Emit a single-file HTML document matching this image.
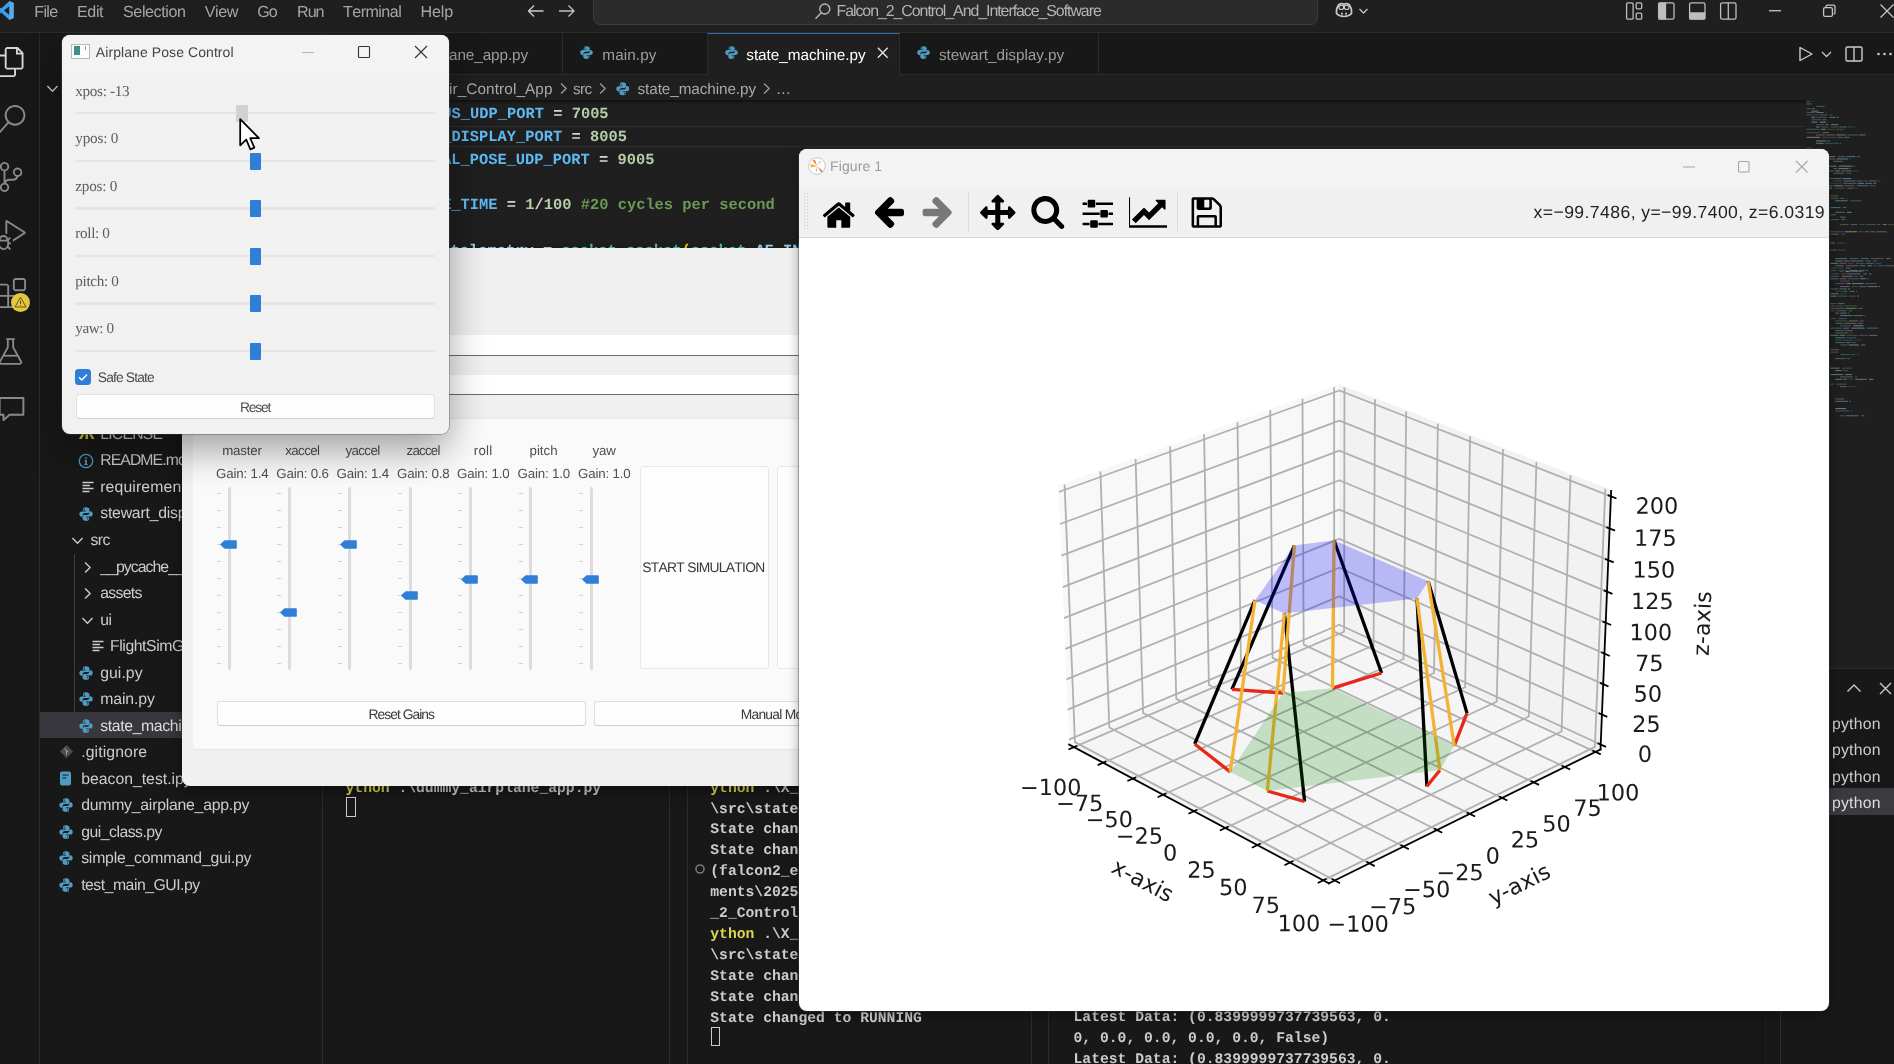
<!DOCTYPE html>
<html><head><meta charset="utf-8"><title>screen</title>
<style>
*{box-sizing:border-box}
html,body{margin:0;padding:0}
body{font-kerning:none;text-rendering:geometricPrecision;width:1894px;height:1064px;overflow:hidden;position:relative;background:#181818;font-family:"Liberation Sans",sans-serif;color:#ccc}
.a{position:absolute}
.t{position:absolute;white-space:pre;line-height:1;transform-origin:0 50%}
.ui{font-family:"Liberation Sans",sans-serif;font-size:15.2px;color:#ccc}
.mono{font-family:"Liberation Mono",monospace}
.serif{font-family:"Liberation Serif",serif}
svg{display:block}
.code{position:absolute;left:0;white-space:pre;font-family:"Liberation Mono",monospace;font-weight:bold;font-size:15.4px;line-height:23px;height:23px;color:#d4d4d4}
.term{position:absolute;white-space:pre;font-family:"Liberation Mono",monospace;font-weight:bold;font-size:14.7px;line-height:20.92px;color:#ccc}
.row{position:absolute;left:40px;height:26.4px;width:282px}
.row .t{top:50%;margin-top:-8px;font-size:15.3px;color:#ccc}
.win{position:absolute;overflow:hidden}
.qt{font-family:"Liberation Sans",sans-serif;color:#3c3c3c}
#root{position:absolute;left:0;top:0;width:1894px;height:1064px;overflow:hidden;will-change:transform;transform:translateZ(0)}
</style></head><body><div id="root">
<svg width="0" height="0" style="position:absolute"><defs>
<symbol id="py" viewBox="0 0 16 16"><path fill="#4f9bc2" d="M7.900 1.200c-2.700 0-2.900 1.100-2.900 2.100v1.500h3v.6H3.700c-1.500 0-2.400 1.200-2.400 2.700s.9 2.700 2.400 2.700h1V9.200c0-1.200 1-2.100 2.200-2.100h2.800c1 0 1.700-.8 1.700-1.700V3.300c0-1-.9-2.100-3.500-2.100zM6.300 2.500a.65.65 0 1 1 0 1.300.65.65 0 0 1 0-1.300z"/><path fill="#4f9bc2" d="M8.100 14.800c2.700 0 2.900-1.100 2.900-2.100v-1.500H8v-.6h4.300c1.500 0 2.400-1.200 2.400-2.700s-.9-2.700-2.400-2.700h-1v1.600c0 1.200-1 2.100-2.200 2.100H6.300c-1 0-1.700.8-1.700 1.700v2.100c0 1 .9 2.100 3.500 2.100zm1.600-1.300a.65.65 0 1 1 0-1.300.65.65 0 0 1 0 1.300z"/></symbol>
<symbol id="chevd" viewBox="0 0 16 16"><path fill="none" stroke="#ccc" stroke-width="1.3" d="M3.200 5.700 8 10.500l4.800-4.800"/></symbol>
<symbol id="chevr" viewBox="0 0 16 16"><path fill="none" stroke="#ccc" stroke-width="1.3" d="M5.700 3.200 10.500 8l-4.800 4.800"/></symbol>
<symbol id="lines" viewBox="0 0 16 16"><path fill="none" stroke="#ccc" stroke-width="1.700" d="M2.500 3.500h11M2.500 6.500h7.500M2.500 9.500h11M2.500 12.500h7"/></symbol>
</defs></svg>

<!-- ===== title bar ===== -->
<div class="a" style="left:0;top:0;width:1894px;height:32.500px;background:#1f1f1f;border-bottom:1px solid #2b2b2b"></div>
<svg class="a" style="left:-6.500px;top:0.300px" width="21" height="21" viewBox="0 0 24 24"><path fill="#3c9de8" d="M17.600 1.100 8.300 9.700 4.200 6.600 2.500 7.500v9l1.700.9 4.100-3.100 9.300 8.600 4.900-2.200V3.300z"/><path fill="#1f1f1f" d="M17.500 7.200v9.600L11.400 12zM4.300 9.600v4.800L6.800 12z"/><path fill="#5ab0f0" d="M17.600 1.100v21.800l4.900-2.200V3.300z" opacity=".8"/></svg>
<span class="t" style="left:34.3px;top:4.1px;font-size:16.1px;color:#a6a6a6;letter-spacing:-0.71px;">File</span>
<span class="t" style="left:76.9px;top:4.1px;font-size:16.1px;color:#a6a6a6;letter-spacing:-0.35px;">Edit</span>
<span class="t" style="left:123.0px;top:4.1px;font-size:16.1px;color:#a6a6a6;letter-spacing:-0.40px;">Selection</span>
<span class="t" style="left:204.7px;top:4.1px;font-size:16.1px;color:#a6a6a6;letter-spacing:-0.39px;">View</span>
<span class="t" style="left:257.3px;top:4.1px;font-size:16.1px;color:#a6a6a6;letter-spacing:-1.00px;">Go</span>
<span class="t" style="left:297.0px;top:4.1px;font-size:16.1px;color:#a6a6a6;letter-spacing:-0.99px;">Run</span>
<span class="t" style="left:343.1px;top:4.1px;font-size:16.1px;color:#a6a6a6;letter-spacing:-0.57px;">Terminal</span>
<span class="t" style="left:420.4px;top:4.1px;font-size:16.1px;color:#a6a6a6;letter-spacing:-0.13px;">Help</span>
<svg class="a" style="left:526px;top:2px" width="50" height="18" viewBox="0 0 50 18" fill="none" stroke="#ccc" stroke-width="1.400"><path d="M17.500 9H2.500M8 3.500 2.500 9 8 14.500"/><path d="M33 9h15M42.500 3.500 48 9l-5.500 5.500" stroke="#c0c0c0"/></svg>
<div class="a" style="left:592.500px;top:-6px;width:725.500px;height:30.800px;background:#2b2b2b;border:1px solid #3c3c3c;border-radius:7px"></div>
<svg class="a" style="left:814px;top:2px" width="18" height="18" viewBox="0 0 18 18" fill="none" stroke="#bbb" stroke-width="1.300"><circle cx="10.800" cy="7" r="5"/><path d="M7.300 10.800 1.500 16.800"/></svg>
<span class="t" style="left:836.5px;top:3.5px;font-size:15.9px;color:#b4b4b4;letter-spacing:-1.04px;">Falcon_2_Control_And_Interface_Software</span>
<svg class="a" style="left:1333px;top:1px" width="40" height="20" viewBox="0 0 40 20" fill="none" stroke="#ccc" stroke-width="1.500"><path d="M3.500 9.500c0-2 .6-3.300 1.400-4 .4-2.200 1.800-3 4-3 1.200 0 1.800.6 2.100 1.300.3-.7.900-1.300 2.100-1.300 2.200 0 3.600.8 4 3 .8.700 1.400 2 1.400 4v3c-1.600 1.700-4.400 3-7.500 3s-5.900-1.300-7.500-3z" stroke-width="1.700"/><path d="M6 6.200c.4-1.500 1.300-2 2.600-2 1.400 0 2 .7 2 2s-.6 2.300-2.300 2.300S5.700 7.500 6 6.200zM16 6.200c-.4-1.500-1.300-2-2.600-2-1.400 0-2 .7-2 2s.6 2.300 2.300 2.300 2.600-1 2.300-2.300z" stroke-width="1.200"/><path d="M9 11.500v2.200M13 11.500v2.200" stroke-width="1.600"/><path d="M26.500 8l4 4 4-4" stroke-width="1.200"/></svg>
<svg class="a" style="left:1625px;top:2px" width="115" height="18" viewBox="0 0 115 18" fill="none" stroke="#bdbdbd" stroke-width="1.300"><rect x="1.600" y=".800" width="6.500" height="16.400" rx="1.200"/><rect x="11.200" y=".800" width="5.500" height="6" rx="1"/><rect x="11.200" y="11.200" width="5.500" height="6" rx="1"/><rect x="33.600" y=".800" width="15.400" height="16.400" rx="1.800"/><path d="M34 1.200h6.500v15.600H34z" fill="#bdbdbd"/><rect x="64.600" y=".800" width="15.400" height="16.400" rx="1.800"/><path d="M65 11h14.600v5.800H65z" fill="#bdbdbd"/><rect x="95.600" y=".800" width="15.400" height="16.400" rx="1.800"/><path d="M103.300.800v16.400"/></svg>
<svg class="a" style="left:1765px;top:1.500px" width="129" height="18" viewBox="0 0 129 18" fill="none" stroke="#c4c4c4" stroke-width="1.300"><path d="M4 8.700h12"/><rect x="58.600" y="5.600" width="8.800" height="8.800" rx="1.500"/><path d="M61 5.500V4.600c0-.8.600-1.500 1.500-1.500h6c.8 0 1.500.7 1.500 1.500v6c0 .8-.6 1.400-1.400 1.500"/><path d="M115.500 2.500l13 13M128.500 2.500l-13 13"/></svg>

<!-- ===== activity bar ===== -->
<div class="a" style="left:0;top:33px;width:39.500px;height:1031px;background:#181818;border-right:1px solid #2b2b2b"></div>
<svg class="a" style="left:-4.200px;top:46.5px" width="30" height="30" viewBox="0 0 24 24"><path fill="#d7d7d7" d="M17.500 0h-9L7 1.500V6H2.500L1 7.500v15.070L2.500 24h12.070L16 22.570V18h4.700l1.300-1.430V4.500L17.500 0zm0 2.120l2.380 2.380H17.500V2.120zm-3 20.380h-12v-15H7v9.070L8.500 18h6v4.500zm6-6h-12v-15H16V6h4.500v10.500z"/></svg>
<svg class="a" style="left:-4.200px;top:104.5px" width="30" height="30" viewBox="0 0 24 24"><path fill="#8a8a8a" d="M15.250 0a8.250 8.250 0 0 0-6.180 13.720L1 22.880l1.120 1 8.050-9.120A8.251 8.251 0 1 0 15.250.01V0zm0 15a6.750 6.750 0 1 1 0-13.500 6.750 6.750 0 0 1 0 13.500z"/></svg>
<svg class="a" style="left:-4.200px;top:162px" width="30" height="30" viewBox="0 0 24 24"><path fill="#8a8a8a" d="M21.007 8.222A3.738 3.738 0 0 0 15.045 5.200a3.737 3.737 0 0 0 1.156 6.583 2.988 2.988 0 0 1-2.668 1.670h-2.990a4.456 4.456 0 0 0-2.989 1.165V7.400a3.737 3.737 0 1 0-1.494 0v9.117a3.776 3.776 0 1 0 1.816.099 2.990 2.990 0 0 1 2.668-1.667h2.990a4.484 4.484 0 0 0 4.223-3.039 3.736 3.736 0 0 0 3.250-3.687zM4.565 3.738a2.242 2.242 0 1 1 4.484 0 2.242 2.242 0 0 1-4.484 0zm4.484 16.441a2.242 2.242 0 1 1-4.484 0 2.242 2.242 0 0 1 4.484 0zm8.221-9.715a2.242 2.242 0 1 1 0-4.485 2.242 2.242 0 0 1 0 4.485z"/></svg>
<svg class="a" style="left:-4.200px;top:220px" width="30" height="30" viewBox="0 0 24 24"><path fill="#8a8a8a" d="M10.940 13.500l-1.320 1.320a3.730 3.730 0 0 0-7.240 0L1.060 13.500 0 14.560l1.720 1.720-.22.220V18H0v1.500h1.500v.080c.077.489.214.966.41 1.420L0 22.940 1.060 24l1.650-1.650A4.308 4.308 0 0 0 6 24a4.310 4.310 0 0 0 3.290-1.650L10.940 24 12 22.940 10.090 21c.198-.464.336-.951.41-1.450v-.1H12V18h-1.500v-1.500l-.22-.22L12 14.560l-1.060-1.060zM6 13.500a2.250 2.250 0 0 1 2.250 2.250h-4.500A2.250 2.250 0 0 1 6 13.500zm3 6a3.330 3.330 0 0 1-3 3 3.330 3.330 0 0 1-3-3v-2.250h6v2.250zm14.760-9.900v1.260L13.500 17.370V15.600l8.500-5.370L9 2v9.460a5.070 5.070 0 0 0-1.500-.72V.63L8.640 0l15.120 9.600z"/></svg>
<svg class="a" style="left:-4.200px;top:278.100px" width="30" height="30" viewBox="0 0 24 24"><path fill="#8a8a8a" d="M13.500 1.500L15 0h7.500L24 1.500V9l-1.500 1.500H15L13.500 9V1.500zm1.500 0V9h7.500V1.500H15zM0 15V6l1.500-1.500H9L10.500 6v7.500H18l1.500 1.500v7.500L18 24H1.500L0 22.500V15zm9-1.500V6H1.500v7.500H9zM9 15H1.500v7.500H9V15zm1.500 7.500H18V15h-7.500v7.500z"/></svg>
<div class="a" style="left:11px;top:293.300px;width:19px;height:19px;border-radius:50%;background:#e3c742"></div>
<svg class="a" style="left:14px;top:296.300px" width="13" height="12" viewBox="0 0 13 12" fill="none" stroke="#6b5a10" stroke-width="1" stroke-linejoin="round"><path d="M6.500 1.200 12 11H1z"/><path d="M6.500 4.500v3.500M6.500 9v.8"/></svg>
<svg class="a" style="left:-3.800px;top:336.500px" width="29" height="29" viewBox="0 0 24 24" fill="none" stroke="#8a8a8a" stroke-width="1.500" stroke-linejoin="round"><path d="M8.500 1.800h7M9.800 1.800v6.700L3.300 20.300c-.5 1 .2 2 1.300 2h14.800c1.100 0 1.800-1 1.300-2L14.200 8.500V1.800"/><path d="M6.300 15.500h11.400"/></svg>
<svg class="a" style="left:-4.200px;top:393px" width="31" height="31" viewBox="0 0 24 24" fill="none" stroke="#8a8a8a" stroke-width="1.500" stroke-linejoin="round"><path d="M2.800 3.800h18.400v13H10.500L5.800 21v-4.200h-3z"/></svg>

<!-- ===== sidebar ===== -->
<div class="a" style="left:40px;top:33px;width:282.500px;height:1031px;background:#181818;border-right:1px solid #2b2b2b"></div>
<svg class="a" style="left:43.500px;top:79.500px" width="17" height="17"><use href="#chevd"/></svg>
<div class="a" style="left:74px;top:554px;width:1px;height:184px;background:#3c3c3c"></div>
<div class="a" style="left:40px;top:712px;width:282px;height:26.200px;background:#37373d"></div>
<div class="a" style="left:79px;top:427px;width:14px;height:14px;color:#cbcb41;font:bold 17px 'Liberation Sans',sans-serif;line-height:14px">&#1046;</div>
<span class="t" style="left:100.2px;top:427.4px;font-size:15.8px;color:#ccc;letter-spacing:-0.78px;">LICENSE</span>
<svg class="a" style="left:77.500px;top:452.500px" width="16" height="16" viewBox="0 0 16 16" fill="none" stroke="#4f9bc2" stroke-width="1.300"><circle cx="8" cy="8" r="6.700"/><path d="M8 7v4.500M8 4.200v1.500" stroke-width="1.700"/><path d="M6.500 7.300h1.500M6.300 11.500h3.400" stroke-width="1"/></svg>
<span class="t" style="left:100.2px;top:453.4px;font-size:15.8px;color:#ccc;letter-spacing:-0.93px;">README.md</span>
<svg class="a" style="left:79.500px;top:479px" width="16" height="16"><use href="#lines"/></svg>
<span class="t" style="left:100.2px;top:479.9px;font-size:15.8px;color:#ccc;letter-spacing:0.13px;">requirements.txt</span>
<svg class="a" style="left:77.500px;top:505.500px" width="16" height="16"><use href="#py"/></svg>
<span class="t" style="left:100.2px;top:506.4px;font-size:15.8px;color:#ccc;letter-spacing:-0.21px;">stewart_display.py</span>
<svg class="a" style="left:69px;top:532px" width="17" height="17"><use href="#chevd"/></svg>
<span class="t" style="left:90.5px;top:533.2px;font-size:15.8px;color:#ccc;letter-spacing:-0.60px;">src</span>
<svg class="a" style="left:79px;top:558.500px" width="17" height="17"><use href="#chevr"/></svg>
<span class="t" style="left:100.2px;top:559.7px;font-size:15.8px;color:#ccc;letter-spacing:-0.94px;">__pycache__</span>
<svg class="a" style="left:79px;top:585px" width="17" height="17"><use href="#chevr"/></svg>
<span class="t" style="left:100.2px;top:586.2px;font-size:15.8px;color:#ccc;letter-spacing:-0.71px;">assets</span>
<svg class="a" style="left:79px;top:611.500px" width="17" height="17"><use href="#chevd"/></svg>
<span class="t" style="left:100.2px;top:612.7px;font-size:15.8px;color:#ccc;letter-spacing:-0.37px;">ui</span>
<svg class="a" style="left:89.500px;top:638px" width="16" height="16"><use href="#lines"/></svg>
<span class="t" style="left:110.0px;top:639.2px;font-size:15.8px;color:#ccc;letter-spacing:-0.43px;">FlightSimGUI.ui</span>
<svg class="a" style="left:77.500px;top:664.500px" width="16" height="16"><use href="#py"/></svg>
<span class="t" style="left:100.2px;top:665.7px;font-size:15.8px;color:#ccc;letter-spacing:0.05px;">gui.py</span>
<svg class="a" style="left:77.500px;top:691px" width="16" height="16"><use href="#py"/></svg>
<span class="t" style="left:100.2px;top:692.2px;font-size:15.8px;color:#ccc;letter-spacing:-0.10px;">main.py</span>
<svg class="a" style="left:77.500px;top:717.500px" width="16" height="16"><use href="#py"/></svg>
<span class="t" style="left:100.2px;top:718.7px;font-size:15.8px;color:#ddd;letter-spacing:-0.36px;">state_machine.py</span>
<svg class="a" style="left:58.500px;top:744px" width="15" height="15" viewBox="0 0 15 15"><path fill="#4a4f4f" d="M7.500 1 14 7.500 7.500 14 1 7.500z"/><path stroke="#9aa" stroke-width="1" fill="none" d="M5.500 4.500 9 8M7.500 6.500v4"/></svg>
<span class="t" style="left:81.2px;top:745.2px;font-size:15.8px;color:#ccc;letter-spacing:0.10px;">.gitignore</span>
<svg class="a" style="left:58.500px;top:770.500px" width="13" height="15" viewBox="0 0 13 15"><rect x="1" y=".5" width="11" height="14" rx="2" fill="#4f9bc2"/><path d="M3.500 4h6M3.500 7h4" stroke="#181818" stroke-width="1.200"/></svg>
<span class="t" style="left:81.2px;top:771.7px;font-size:15.8px;color:#ccc;letter-spacing:-0.01px;">beacon_test.ipynb</span>
<svg class="a" style="left:58px;top:797px" width="16" height="16"><use href="#py"/></svg>
<span class="t" style="left:81.2px;top:798.4px;font-size:15.8px;color:#ccc;letter-spacing:-0.24px;">dummy_airplane_app.py</span>
<svg class="a" style="left:58px;top:823.500px" width="16" height="16"><use href="#py"/></svg>
<span class="t" style="left:81.2px;top:824.9px;font-size:15.8px;color:#ccc;letter-spacing:-0.51px;">gui_class.py</span>
<svg class="a" style="left:58px;top:850px" width="16" height="16"><use href="#py"/></svg>
<span class="t" style="left:81.2px;top:851.4px;font-size:15.8px;color:#ccc;letter-spacing:-0.22px;">simple_command_gui.py</span>
<svg class="a" style="left:58px;top:876.500px" width="16" height="16"><use href="#py"/></svg>
<span class="t" style="left:81.2px;top:877.9px;font-size:15.8px;color:#ccc;letter-spacing:-0.50px;">test_main_GUI.py</span>

<!-- ===== editor ===== -->
<div class="a" style="left:323px;top:33px;width:1571px;height:41.500px;background:#181818;border-bottom:1px solid #2b2b2b"></div>
<div class="a" style="left:323px;top:74.500px;width:1571px;height:594px;background:#1f1f1f"></div>
<div class="a" style="left:562px;top:33px;width:1px;height:41px;background:#2b2b2b"></div>
<div class="a" style="left:1097.500px;top:33px;width:1px;height:41px;background:#2b2b2b"></div>
<div class="a" style="left:707px;top:33px;width:193px;height:42px;background:#1f1f1f;border-top:1.500px solid #2a6db3;border-left:1px solid #2b2b2b;border-right:1px solid #2b2b2b"></div>
<span class="t" style="left:449.0px;top:47.6px;font-size:15.3px;color:#9d9d9d;letter-spacing:-0.09px;">ane_app.py</span>
<svg class="a" style="left:579.3px;top:45.200px" width="15" height="15"><use href="#py"/></svg>
<span class="t" style="left:602.3px;top:47.6px;font-size:15.3px;color:#9d9d9d;letter-spacing:0.09px;">main.py</span>
<svg class="a" style="left:723.8px;top:45.200px" width="15" height="15"><use href="#py"/></svg>
<span class="t" style="left:746.3px;top:47.6px;font-size:15.3px;color:#fff;letter-spacing:-0.04px;">state_machine.py</span>
<svg class="a" style="left:876px;top:46.300px" width="13.500" height="13.500" viewBox="0 0 15 15" fill="none" stroke="#e6e6e6" stroke-width="1.500"><path d="M2 2l11 11M13 2 2 13"/></svg>
<svg class="a" style="left:915.8px;top:45.200px" width="15" height="15"><use href="#py"/></svg>
<span class="t" style="left:939.0px;top:47.6px;font-size:15.3px;color:#9d9d9d;letter-spacing:-0.04px;">stewart_display.py</span>
<svg class="a" style="left:1796px;top:44px" width="98" height="20" viewBox="0 0 98 20" fill="none" stroke="#ccc" stroke-width="1.400" stroke-linejoin="round"><path d="M4 3.500v13l12-6.500z"/><path d="M26 8l4.500 4.500L35 8" stroke-width="1.200"/><rect x="50" y="3" width="16" height="14" rx="1.500"/><path d="M58 3v14"/><g fill="#ccc" stroke="none"><circle cx="82.500" cy="10" r="1.300"/><circle cx="88.500" cy="10" r="1.300"/><circle cx="94.500" cy="10" r="1.300"/></g></svg>
<!-- breadcrumbs -->
<span class="t" style="left:449.0px;top:81.5px;font-size:15.3px;color:#a9a9a9;letter-spacing:0.11px;">ir_Control_App</span>
<svg class="a" style="left:555px;top:80px" width="17" height="17"><use href="#chevr" opacity=".7"/></svg>
<span class="t" style="left:573.0px;top:81.5px;font-size:15.3px;color:#a9a9a9;letter-spacing:-0.64px;">src</span>
<svg class="a" style="left:593.500px;top:80px" width="17" height="17"><use href="#chevr" opacity=".7"/></svg>
<svg class="a" style="left:615px;top:80.500px" width="15.500" height="15.500"><use href="#py"/></svg>
<span class="t" style="left:637.5px;top:81.5px;font-size:15.3px;color:#a9a9a9;letter-spacing:-0.09px;">state_machine.py</span>
<svg class="a" style="left:758px;top:80px" width="17" height="17"><use href="#chevr" opacity=".7"/></svg>
<span class="t" style="left:775.7px;top:81.5px;font-size:15.3px;color:#a9a9a9;letter-spacing:-4.80px;">…</span>
<div class="a" style="left:323px;top:100px;width:1482px;height:4px;background:linear-gradient(#101010,rgba(16,16,16,0))"></div>
<!-- code -->
<div class="a" style="left:323px;top:125.500px;width:1482px;height:21.500px;border-top:1px solid #2e2e2e;border-bottom:1px solid #2e2e2e"></div>
<div class="code" style="left:405.400px;top:102.900px"><span style="color:#5fbaf2">STATUS_UDP_PORT</span> = <span style="color:#b5cea8">7005</span></div>
<div class="code" style="left:377.500px;top:125.700px"><span style="color:#5fbaf2">STEWART_DISPLAY_PORT</span> = <span style="color:#b5cea8">8005</span></div>
<div class="code" style="left:340.400px;top:148.500px"><span style="color:#5fbaf2">AIRPLANE_REAL_POSE_UDP_PORT</span> = <span style="color:#b5cea8">9005</span></div>
<div class="code" style="left:405.200px;top:194.100px"><span style="color:#5fbaf2">CYCLE_TIME</span> = <span style="color:#b5cea8">1</span>/<span style="color:#b5cea8">100</span> <span style="color:#6a9955">#20 cycles per second</span></div>
<div class="code" style="left:367.400px;top:239.700px"><span style="color:#9cdcfe">airplane_telemetry</span> = <span style="color:#4ec9b0">socket</span>.<span style="color:#4ec9b0">socket</span><span style="color:#ffd700">(</span><span style="color:#4ec9b0">socket</span>.<span style="color:#9cdcfe">AF_INET</span>, <span style="color:#4ec9b0">socket</span>.SOCK_DGRAM<span style="color:#ffd700">)</span></div>
<!--MM0--><svg class="a" style="left:0;top:0" width="1894" height="680" viewBox="0 0 1894 680"><rect x="1806.5" y="101.0" width="3.5" height="1.1" fill="#d4d4d4" opacity="0.27"/><rect x="1812.4" y="101.0" width="0.6" height="1.1" fill="#d4d4d4" opacity="0.30"/><rect x="1806.5" y="103.4" width="5.2" height="1.1" fill="#4fc1ff" opacity="0.46"/><rect x="1816.1" y="105.8" width="8.6" height="1.1" fill="#4ec9b0" opacity="0.40"/><rect x="1806.5" y="108.2" width="4.5" height="1.1" fill="#dcdcaa" opacity="0.29"/><rect x="1812.2" y="108.2" width="2.3" height="1.1" fill="#d4d4d4" opacity="0.45"/><rect x="1811.3" y="110.6" width="7.1" height="1.1" fill="#d4d4d4" opacity="0.43"/><rect x="1806.5" y="112.0" width="8.8" height="1.1" fill="#c586c0" opacity="0.37"/><rect x="1816.5" y="112.0" width="7.0" height="1.1" fill="#b5cea8" opacity="0.45"/><rect x="1825.9" y="112.0" width="0.5" height="1.1" fill="#9cdcfe" opacity="0.39"/><rect x="1806.5" y="114.4" width="6.2" height="1.1" fill="#9cdcfe" opacity="0.28"/><rect x="1813.9" y="114.4" width="4.8" height="1.1" fill="#c586c0" opacity="0.29"/><rect x="1819.9" y="114.4" width="7.6" height="1.1" fill="#9cdcfe" opacity="0.27"/><rect x="1829.9" y="114.4" width="2.1" height="1.1" fill="#c586c0" opacity="0.34"/><rect x="1811.3" y="116.8" width="3.8" height="1.1" fill="#9cdcfe" opacity="0.49"/><rect x="1816.3" y="116.8" width="10.7" height="1.1" fill="#9cdcfe" opacity="0.27"/><rect x="1829.3" y="116.8" width="6.4" height="1.1" fill="#4ec9b0" opacity="0.50"/><rect x="1836.9" y="116.8" width="1.5" height="1.1" fill="#dcdcaa" opacity="0.47"/><rect x="1811.3" y="119.2" width="9.7" height="1.1" fill="#d4d4d4" opacity="0.26"/><rect x="1822.2" y="119.2" width="4.4" height="1.1" fill="#b5cea8" opacity="0.35"/><rect x="1811.3" y="121.6" width="6.1" height="1.1" fill="#9cdcfe" opacity="0.45"/><rect x="1819.8" y="121.6" width="6.1" height="1.1" fill="#dcdcaa" opacity="0.50"/><rect x="1828.2" y="121.6" width="0.7" height="1.1" fill="#b5cea8" opacity="0.29"/><rect x="1816.1" y="124.0" width="8.3" height="1.1" fill="#4ec9b0" opacity="0.30"/><rect x="1825.6" y="124.0" width="3.0" height="1.1" fill="#dcdcaa" opacity="0.38"/><rect x="1831.1" y="124.0" width="7.1" height="1.1" fill="#9cdcfe" opacity="0.42"/><rect x="1816.1" y="126.4" width="3.6" height="1.1" fill="#9cdcfe" opacity="0.45"/><rect x="1820.9" y="126.4" width="7.4" height="1.1" fill="#dcdcaa" opacity="0.28"/><rect x="1830.7" y="126.4" width="7.4" height="1.1" fill="#b5cea8" opacity="0.27"/><rect x="1839.3" y="126.4" width="7.8" height="1.1" fill="#9cdcfe" opacity="0.34"/><rect x="1848.3" y="126.4" width="4.1" height="1.1" fill="#4ec9b0" opacity="0.29"/><rect x="1853.7" y="126.4" width="1.8" height="1.1" fill="#4ec9b0" opacity="0.26"/><rect x="1806.5" y="128.8" width="13.5" height="1.1" fill="#4ec9b0" opacity="0.34"/><rect x="1821.2" y="128.8" width="4.3" height="1.1" fill="#d4d4d4" opacity="0.50"/><rect x="1826.7" y="128.8" width="8.3" height="1.1" fill="#6a9955" opacity="0.27"/><rect x="1836.2" y="128.8" width="8.1" height="1.1" fill="#6a9955" opacity="0.37"/><rect x="1806.5" y="132.0" width="13.5" height="1.1" fill="#c586c0" opacity="0.29"/><rect x="1822.4" y="132.0" width="6.7" height="1.1" fill="#d4d4d4" opacity="0.32"/><rect x="1816.1" y="134.4" width="8.7" height="1.1" fill="#9cdcfe" opacity="0.34"/><rect x="1826.0" y="134.4" width="8.9" height="1.1" fill="#d4d4d4" opacity="0.33"/><rect x="1836.1" y="134.4" width="9.7" height="1.1" fill="#b5cea8" opacity="0.45"/><rect x="1847.0" y="134.4" width="11.1" height="1.1" fill="#b5cea8" opacity="0.30"/><rect x="1859.3" y="134.4" width="6.3" height="1.1" fill="#4fc1ff" opacity="0.50"/><rect x="1806.5" y="136.8" width="13.5" height="1.1" fill="#d4d4d4" opacity="0.45"/><rect x="1822.4" y="136.8" width="13.9" height="1.1" fill="#c586c0" opacity="0.27"/><rect x="1837.5" y="136.8" width="5.5" height="1.1" fill="#b5cea8" opacity="0.33"/><rect x="1844.2" y="136.8" width="5.4" height="1.1" fill="#4ec9b0" opacity="0.46"/><rect x="1816.1" y="140.4" width="10.3" height="1.1" fill="#dcdcaa" opacity="0.45"/><rect x="1827.6" y="140.4" width="2.6" height="1.1" fill="#9cdcfe" opacity="0.36"/><rect x="1816.1" y="142.8" width="7.4" height="1.1" fill="#9cdcfe" opacity="0.43"/><rect x="1824.7" y="142.8" width="13.9" height="1.1" fill="#4fc1ff" opacity="0.29"/><rect x="1839.8" y="142.8" width="0.9" height="1.1" fill="#9cdcfe" opacity="0.40"/><rect x="1806.5" y="147.0" width="5.1" height="1.1" fill="#4fc1ff" opacity="0.25"/><rect x="1811.3" y="149.4" width="4.5" height="1.1" fill="#b5cea8" opacity="0.46"/><rect x="1817.0" y="149.4" width="3.3" height="1.1" fill="#b5cea8" opacity="0.32"/><rect x="1821.5" y="149.4" width="1.1" height="1.1" fill="#c586c0" opacity="0.31"/><rect x="1828.5" y="156.0" width="6.9" height="1.1" fill="#d4d4d4" opacity="0.42"/><rect x="1837.8" y="156.0" width="7.6" height="1.1" fill="#d4d4d4" opacity="0.28"/><rect x="1846.6" y="156.0" width="8.8" height="1.1" fill="#4fc1ff" opacity="0.47"/><rect x="1856.6" y="156.0" width="3.6" height="1.1" fill="#9cdcfe" opacity="0.29"/><rect x="1828.5" y="158.4" width="6.6" height="1.1" fill="#d4d4d4" opacity="0.38"/><rect x="1836.3" y="158.4" width="11.6" height="1.1" fill="#9cdcfe" opacity="0.47"/><rect x="1849.1" y="158.4" width="2.1" height="1.1" fill="#6a9955" opacity="0.26"/><rect x="1833.3" y="160.8" width="9.2" height="1.1" fill="#9cdcfe" opacity="0.36"/><rect x="1828.5" y="165.6" width="8.0" height="1.1" fill="#d4d4d4" opacity="0.45"/><rect x="1838.9" y="165.6" width="13.4" height="1.1" fill="#d4d4d4" opacity="0.47"/><rect x="1853.4" y="165.6" width="1.2" height="1.1" fill="#b5cea8" opacity="0.46"/><rect x="1833.3" y="168.0" width="3.8" height="1.1" fill="#b5cea8" opacity="0.36"/><rect x="1838.3" y="168.0" width="10.4" height="1.1" fill="#9cdcfe" opacity="0.47"/><rect x="1849.9" y="168.0" width="0.9" height="1.1" fill="#9cdcfe" opacity="0.42"/><rect x="1828.5" y="170.4" width="5.4" height="1.1" fill="#9cdcfe" opacity="0.35"/><rect x="1835.1" y="170.4" width="4.8" height="1.1" fill="#9cdcfe" opacity="0.46"/><rect x="1841.1" y="170.4" width="10.8" height="1.1" fill="#d4d4d4" opacity="0.35"/><rect x="1853.1" y="170.4" width="4.7" height="1.1" fill="#c586c0" opacity="0.27"/><rect x="1833.3" y="172.8" width="10.7" height="1.1" fill="#dcdcaa" opacity="0.33"/><rect x="1846.4" y="172.8" width="4.7" height="1.1" fill="#9cdcfe" opacity="0.28"/><rect x="1828.5" y="178.0" width="13.0" height="1.1" fill="#9cdcfe" opacity="0.32"/><rect x="1842.7" y="178.0" width="8.5" height="1.1" fill="#9cdcfe" opacity="0.45"/><rect x="1833.3" y="180.4" width="9.3" height="1.1" fill="#c586c0" opacity="0.27"/><rect x="1843.8" y="180.4" width="11.8" height="1.1" fill="#9cdcfe" opacity="0.36"/><rect x="1856.8" y="180.4" width="6.0" height="1.1" fill="#4fc1ff" opacity="0.41"/><rect x="1863.9" y="180.4" width="3.9" height="1.1" fill="#b5cea8" opacity="0.27"/><rect x="1869.1" y="180.4" width="8.0" height="1.1" fill="#c586c0" opacity="0.50"/><rect x="1878.2" y="180.4" width="2.0" height="1.1" fill="#6a9955" opacity="0.41"/><rect x="1828.5" y="182.8" width="13.7" height="1.1" fill="#6a9955" opacity="0.26"/><rect x="1843.4" y="182.8" width="13.3" height="1.1" fill="#9cdcfe" opacity="0.33"/><rect x="1857.8" y="182.8" width="6.2" height="1.1" fill="#d4d4d4" opacity="0.42"/><rect x="1865.2" y="182.8" width="6.8" height="1.1" fill="#4fc1ff" opacity="0.50"/><rect x="1873.2" y="182.8" width="3.0" height="1.1" fill="#d4d4d4" opacity="0.39"/><rect x="1828.5" y="185.2" width="4.2" height="1.1" fill="#9cdcfe" opacity="0.36"/><rect x="1833.9" y="185.2" width="9.0" height="1.1" fill="#dcdcaa" opacity="0.49"/><rect x="1844.1" y="185.2" width="10.6" height="1.1" fill="#b5cea8" opacity="0.34"/><rect x="1857.0" y="185.2" width="11.0" height="1.1" fill="#9cdcfe" opacity="0.35"/><rect x="1869.3" y="185.2" width="6.8" height="1.1" fill="#9cdcfe" opacity="0.25"/><rect x="1828.5" y="187.6" width="3.6" height="1.1" fill="#9cdcfe" opacity="0.46"/><rect x="1834.5" y="187.6" width="10.4" height="1.1" fill="#6a9955" opacity="0.40"/><rect x="1847.3" y="187.6" width="6.2" height="1.1" fill="#d4d4d4" opacity="0.30"/><rect x="1854.7" y="187.6" width="2.4" height="1.1" fill="#6a9955" opacity="0.34"/><rect x="1830.5" y="195.4" width="7.7" height="1.1" fill="#b5cea8" opacity="0.34"/><rect x="1830.5" y="197.8" width="8.5" height="1.1" fill="#b5cea8" opacity="0.31"/><rect x="1840.2" y="197.8" width="4.0" height="1.1" fill="#9cdcfe" opacity="0.29"/><rect x="1846.6" y="197.8" width="0.8" height="1.1" fill="#4fc1ff" opacity="0.32"/><rect x="1835.3" y="200.2" width="12.4" height="1.1" fill="#9cdcfe" opacity="0.41"/><rect x="1850.1" y="200.2" width="11.6" height="1.1" fill="#4ec9b0" opacity="0.35"/><rect x="1830.5" y="207.0" width="10.1" height="1.1" fill="#4fc1ff" opacity="0.46"/><rect x="1843.0" y="207.0" width="3.4" height="1.1" fill="#9cdcfe" opacity="0.36"/><rect x="1835.3" y="211.8" width="9.3" height="1.1" fill="#4fc1ff" opacity="0.46"/><rect x="1847.0" y="211.8" width="4.6" height="1.1" fill="#9cdcfe" opacity="0.49"/><rect x="1830.5" y="214.2" width="5.6" height="1.1" fill="#9cdcfe" opacity="0.34"/><rect x="1840.1" y="216.6" width="5.3" height="1.1" fill="#b5cea8" opacity="0.37"/><rect x="1830.5" y="219.0" width="8.5" height="1.1" fill="#d4d4d4" opacity="0.27"/><rect x="1841.4" y="219.0" width="3.7" height="1.1" fill="#d4d4d4" opacity="0.31"/><rect x="1846.4" y="219.0" width="0.4" height="1.1" fill="#b5cea8" opacity="0.43"/><rect x="1840.1" y="224.0" width="8.4" height="1.1" fill="#dcdcaa" opacity="0.27"/><rect x="1850.9" y="224.0" width="6.2" height="1.1" fill="#4fc1ff" opacity="0.40"/><rect x="1859.5" y="224.0" width="5.2" height="1.1" fill="#4ec9b0" opacity="0.29"/><rect x="1865.9" y="224.0" width="10.2" height="1.1" fill="#6a9955" opacity="0.41"/><rect x="1877.2" y="224.0" width="3.1" height="1.1" fill="#4fc1ff" opacity="0.37"/><rect x="1882.8" y="224.0" width="4.1" height="1.1" fill="#b5cea8" opacity="0.42"/><rect x="1888.1" y="224.0" width="9.0" height="1.1" fill="#6a9955" opacity="0.37"/><rect x="1830.5" y="231.2" width="13.3" height="1.1" fill="#4fc1ff" opacity="0.32"/><rect x="1845.0" y="231.2" width="12.0" height="1.1" fill="#d4d4d4" opacity="0.50"/><rect x="1858.2" y="231.2" width="5.3" height="1.1" fill="#b5cea8" opacity="0.27"/><rect x="1864.7" y="231.2" width="4.6" height="1.1" fill="#d4d4d4" opacity="0.32"/><rect x="1870.5" y="231.2" width="4.5" height="1.1" fill="#9cdcfe" opacity="0.38"/><rect x="1876.1" y="231.2" width="10.7" height="1.1" fill="#b5cea8" opacity="0.37"/><rect x="1830.5" y="233.6" width="8.4" height="1.1" fill="#d4d4d4" opacity="0.35"/><rect x="1841.3" y="233.6" width="3.8" height="1.1" fill="#c586c0" opacity="0.34"/><rect x="1830.5" y="242.4" width="4.3" height="1.1" fill="#b5cea8" opacity="0.43"/><rect x="1837.2" y="242.4" width="6.2" height="1.1" fill="#c586c0" opacity="0.27"/><rect x="1844.6" y="242.4" width="1.7" height="1.1" fill="#4ec9b0" opacity="0.27"/><rect x="1830.5" y="249.6" width="6.1" height="1.1" fill="#9cdcfe" opacity="0.31"/><rect x="1837.8" y="249.6" width="7.8" height="1.1" fill="#c586c0" opacity="0.30"/><rect x="1835.3" y="258.0" width="11.9" height="1.1" fill="#9cdcfe" opacity="0.35"/><rect x="1849.6" y="258.0" width="9.0" height="1.1" fill="#9cdcfe" opacity="0.26"/><rect x="1861.1" y="258.0" width="7.5" height="1.1" fill="#4ec9b0" opacity="0.44"/><rect x="1871.0" y="258.0" width="12.6" height="1.1" fill="#d4d4d4" opacity="0.26"/><rect x="1886.0" y="258.0" width="4.4" height="1.1" fill="#d4d4d4" opacity="0.35"/><rect x="1891.6" y="258.0" width="0.4" height="1.1" fill="#9cdcfe" opacity="0.32"/><rect x="1835.3" y="260.4" width="7.3" height="1.1" fill="#9cdcfe" opacity="0.41"/><rect x="1843.8" y="260.4" width="5.3" height="1.1" fill="#d4d4d4" opacity="0.39"/><rect x="1850.3" y="260.4" width="13.0" height="1.1" fill="#d4d4d4" opacity="0.36"/><rect x="1865.7" y="260.4" width="5.1" height="1.1" fill="#9cdcfe" opacity="0.29"/><rect x="1873.2" y="260.4" width="3.5" height="1.1" fill="#b5cea8" opacity="0.34"/><rect x="1830.5" y="262.8" width="7.5" height="1.1" fill="#dcdcaa" opacity="0.44"/><rect x="1839.2" y="262.8" width="7.1" height="1.1" fill="#c586c0" opacity="0.44"/><rect x="1847.6" y="262.8" width="6.1" height="1.1" fill="#c586c0" opacity="0.28"/><rect x="1856.0" y="262.8" width="8.8" height="1.1" fill="#b5cea8" opacity="0.27"/><rect x="1866.1" y="262.8" width="7.2" height="1.1" fill="#9cdcfe" opacity="0.36"/><rect x="1874.5" y="262.8" width="6.4" height="1.1" fill="#4fc1ff" opacity="0.28"/><rect x="1835.3" y="265.2" width="8.4" height="1.1" fill="#9cdcfe" opacity="0.35"/><rect x="1846.1" y="265.2" width="12.4" height="1.1" fill="#d4d4d4" opacity="0.31"/><rect x="1859.7" y="265.2" width="5.5" height="1.1" fill="#9cdcfe" opacity="0.38"/><rect x="1867.6" y="265.2" width="4.2" height="1.1" fill="#9cdcfe" opacity="0.46"/><rect x="1873.0" y="265.2" width="3.9" height="1.1" fill="#4fc1ff" opacity="0.25"/><rect x="1878.1" y="265.2" width="5.6" height="1.1" fill="#4fc1ff" opacity="0.41"/><rect x="1884.9" y="265.2" width="11.0" height="1.1" fill="#9cdcfe" opacity="0.31"/><rect x="1830.5" y="267.6" width="6.3" height="1.1" fill="#4ec9b0" opacity="0.30"/><rect x="1838.0" y="267.6" width="5.5" height="1.1" fill="#4ec9b0" opacity="0.25"/><rect x="1845.9" y="267.6" width="4.8" height="1.1" fill="#d4d4d4" opacity="0.32"/><rect x="1830.5" y="270.0" width="5.6" height="1.1" fill="#b5cea8" opacity="0.26"/><rect x="1837.3" y="270.0" width="10.8" height="1.1" fill="#6a9955" opacity="0.26"/><rect x="1849.2" y="270.0" width="8.5" height="1.1" fill="#9cdcfe" opacity="0.41"/><rect x="1858.9" y="270.0" width="5.8" height="1.1" fill="#9cdcfe" opacity="0.36"/><rect x="1865.9" y="270.0" width="2.2" height="1.1" fill="#4fc1ff" opacity="0.42"/><rect x="1840.1" y="271.0" width="3.1" height="1.1" fill="#6a9955" opacity="0.43"/><rect x="1845.6" y="271.0" width="3.7" height="1.1" fill="#d4d4d4" opacity="0.49"/><rect x="1850.5" y="271.0" width="11.4" height="1.1" fill="#b5cea8" opacity="0.31"/><rect x="1863.1" y="271.0" width="1.0" height="1.1" fill="#6a9955" opacity="0.28"/><rect x="1830.5" y="273.4" width="8.3" height="1.1" fill="#9cdcfe" opacity="0.26"/><rect x="1841.2" y="273.4" width="4.6" height="1.1" fill="#dcdcaa" opacity="0.26"/><rect x="1847.0" y="273.4" width="13.7" height="1.1" fill="#9cdcfe" opacity="0.35"/><rect x="1863.2" y="273.4" width="3.7" height="1.1" fill="#dcdcaa" opacity="0.36"/><rect x="1869.2" y="273.4" width="1.9" height="1.1" fill="#9cdcfe" opacity="0.50"/><rect x="1830.5" y="275.8" width="8.8" height="1.1" fill="#d4d4d4" opacity="0.26"/><rect x="1841.7" y="275.8" width="11.0" height="1.1" fill="#c586c0" opacity="0.50"/><rect x="1853.9" y="275.8" width="4.9" height="1.1" fill="#4fc1ff" opacity="0.27"/><rect x="1859.9" y="275.8" width="3.1" height="1.1" fill="#9cdcfe" opacity="0.39"/><rect x="1830.5" y="278.2" width="7.8" height="1.1" fill="#4fc1ff" opacity="0.43"/><rect x="1839.5" y="278.2" width="7.1" height="1.1" fill="#d4d4d4" opacity="0.30"/><rect x="1847.8" y="278.2" width="11.1" height="1.1" fill="#d4d4d4" opacity="0.26"/><rect x="1860.1" y="278.2" width="5.7" height="1.1" fill="#9cdcfe" opacity="0.44"/><rect x="1867.0" y="278.2" width="1.6" height="1.1" fill="#d4d4d4" opacity="0.27"/><rect x="1840.1" y="280.6" width="9.7" height="1.1" fill="#c586c0" opacity="0.32"/><rect x="1852.2" y="280.6" width="1.0" height="1.1" fill="#c586c0" opacity="0.48"/><rect x="1835.3" y="283.0" width="10.0" height="1.1" fill="#9cdcfe" opacity="0.26"/><rect x="1846.5" y="283.0" width="4.2" height="1.1" fill="#d4d4d4" opacity="0.49"/><rect x="1851.9" y="283.0" width="11.7" height="1.1" fill="#dcdcaa" opacity="0.45"/><rect x="1864.7" y="283.0" width="11.8" height="1.1" fill="#9cdcfe" opacity="0.25"/><rect x="1840.1" y="286.0" width="9.7" height="1.1" fill="#c586c0" opacity="0.47"/><rect x="1851.0" y="286.0" width="7.0" height="1.1" fill="#4ec9b0" opacity="0.27"/><rect x="1859.2" y="286.0" width="7.3" height="1.1" fill="#9cdcfe" opacity="0.31"/><rect x="1867.7" y="286.0" width="10.1" height="1.1" fill="#d4d4d4" opacity="0.39"/><rect x="1879.0" y="286.0" width="0.9" height="1.1" fill="#dcdcaa" opacity="0.47"/><rect x="1830.5" y="288.4" width="7.6" height="1.1" fill="#d4d4d4" opacity="0.29"/><rect x="1839.3" y="288.4" width="7.6" height="1.1" fill="#4ec9b0" opacity="0.47"/><rect x="1848.1" y="288.4" width="1.9" height="1.1" fill="#9cdcfe" opacity="0.44"/><rect x="1835.3" y="290.8" width="5.8" height="1.1" fill="#6a9955" opacity="0.30"/><rect x="1842.3" y="290.8" width="5.0" height="1.1" fill="#b5cea8" opacity="0.29"/><rect x="1849.7" y="290.8" width="5.1" height="1.1" fill="#9cdcfe" opacity="0.35"/><rect x="1856.0" y="290.8" width="0.9" height="1.1" fill="#b5cea8" opacity="0.41"/><rect x="1830.5" y="293.2" width="8.2" height="1.1" fill="#b5cea8" opacity="0.46"/><rect x="1839.9" y="293.2" width="3.4" height="1.1" fill="#6a9955" opacity="0.31"/><rect x="1844.6" y="293.2" width="1.6" height="1.1" fill="#4ec9b0" opacity="0.30"/><rect x="1830.5" y="295.6" width="5.9" height="1.1" fill="#9cdcfe" opacity="0.49"/><rect x="1837.6" y="295.6" width="10.0" height="1.1" fill="#4ec9b0" opacity="0.34"/><rect x="1848.8" y="295.6" width="7.1" height="1.1" fill="#9cdcfe" opacity="0.26"/><rect x="1857.0" y="295.6" width="1.6" height="1.1" fill="#9cdcfe" opacity="0.48"/><rect x="1830.5" y="303.0" width="6.4" height="1.1" fill="#b5cea8" opacity="0.26"/><rect x="1838.1" y="303.0" width="6.4" height="1.1" fill="#9cdcfe" opacity="0.35"/><rect x="1830.5" y="305.4" width="4.0" height="1.1" fill="#9cdcfe" opacity="0.35"/><rect x="1835.7" y="305.4" width="7.5" height="1.1" fill="#6a9955" opacity="0.42"/><rect x="1844.4" y="305.4" width="12.3" height="1.1" fill="#6a9955" opacity="0.44"/><rect x="1830.5" y="307.8" width="14.0" height="1.1" fill="#c586c0" opacity="0.41"/><rect x="1845.7" y="307.8" width="11.0" height="1.1" fill="#b5cea8" opacity="0.49"/><rect x="1857.9" y="307.8" width="5.0" height="1.1" fill="#dcdcaa" opacity="0.28"/><rect x="1830.5" y="310.2" width="4.8" height="1.1" fill="#4fc1ff" opacity="0.26"/><rect x="1836.5" y="310.2" width="10.0" height="1.1" fill="#dcdcaa" opacity="0.27"/><rect x="1848.9" y="310.2" width="3.0" height="1.1" fill="#d4d4d4" opacity="0.29"/><rect x="1835.3" y="312.6" width="3.7" height="1.1" fill="#dcdcaa" opacity="0.37"/><rect x="1840.2" y="312.6" width="6.3" height="1.1" fill="#4fc1ff" opacity="0.49"/><rect x="1847.8" y="312.6" width="1.2" height="1.1" fill="#4ec9b0" opacity="0.48"/><rect x="1840.1" y="315.0" width="12.1" height="1.1" fill="#9cdcfe" opacity="0.41"/><rect x="1853.4" y="315.0" width="9.8" height="1.1" fill="#4ec9b0" opacity="0.46"/><rect x="1864.4" y="315.0" width="1.4" height="1.1" fill="#b5cea8" opacity="0.26"/><rect x="1830.5" y="318.0" width="5.7" height="1.1" fill="#b5cea8" opacity="0.26"/><rect x="1838.6" y="318.0" width="8.3" height="1.1" fill="#9cdcfe" opacity="0.26"/><rect x="1835.3" y="320.4" width="12.3" height="1.1" fill="#6a9955" opacity="0.41"/><rect x="1848.8" y="320.4" width="9.4" height="1.1" fill="#dcdcaa" opacity="0.35"/><rect x="1859.4" y="320.4" width="4.3" height="1.1" fill="#d4d4d4" opacity="0.29"/><rect x="1835.3" y="322.8" width="7.9" height="1.1" fill="#4ec9b0" opacity="0.44"/><rect x="1844.4" y="322.8" width="12.2" height="1.1" fill="#d4d4d4" opacity="0.35"/><rect x="1857.8" y="322.8" width="4.4" height="1.1" fill="#dcdcaa" opacity="0.34"/><rect x="1863.4" y="322.8" width="0.6" height="1.1" fill="#9cdcfe" opacity="0.26"/><rect x="1840.1" y="325.2" width="10.9" height="1.1" fill="#9cdcfe" opacity="0.26"/><rect x="1853.4" y="325.2" width="10.0" height="1.1" fill="#9cdcfe" opacity="0.49"/><rect x="1830.5" y="327.6" width="11.1" height="1.1" fill="#9cdcfe" opacity="0.30"/><rect x="1842.8" y="327.6" width="6.2" height="1.1" fill="#9cdcfe" opacity="0.42"/><rect x="1851.3" y="327.6" width="13.2" height="1.1" fill="#9cdcfe" opacity="0.46"/><rect x="1867.0" y="327.6" width="11.3" height="1.1" fill="#9cdcfe" opacity="0.33"/><rect x="1835.3" y="330.0" width="8.5" height="1.1" fill="#d4d4d4" opacity="0.30"/><rect x="1845.0" y="330.0" width="7.4" height="1.1" fill="#b5cea8" opacity="0.33"/><rect x="1835.3" y="332.4" width="13.3" height="1.1" fill="#9cdcfe" opacity="0.33"/><rect x="1849.8" y="332.4" width="3.3" height="1.1" fill="#6a9955" opacity="0.28"/><rect x="1830.5" y="334.8" width="8.0" height="1.1" fill="#d4d4d4" opacity="0.40"/><rect x="1839.7" y="334.8" width="5.8" height="1.1" fill="#d4d4d4" opacity="0.41"/><rect x="1846.7" y="334.8" width="11.1" height="1.1" fill="#c586c0" opacity="0.32"/><rect x="1859.0" y="334.8" width="9.4" height="1.1" fill="#c586c0" opacity="0.33"/><rect x="1869.5" y="334.8" width="7.8" height="1.1" fill="#9cdcfe" opacity="0.40"/><rect x="1835.3" y="337.2" width="10.0" height="1.1" fill="#4ec9b0" opacity="0.48"/><rect x="1846.5" y="337.2" width="9.9" height="1.1" fill="#4fc1ff" opacity="0.31"/><rect x="1835.3" y="339.6" width="7.0" height="1.1" fill="#4fc1ff" opacity="0.28"/><rect x="1843.5" y="339.6" width="9.7" height="1.1" fill="#4fc1ff" opacity="0.26"/><rect x="1854.4" y="339.6" width="7.9" height="1.1" fill="#6a9955" opacity="0.28"/><rect x="1835.3" y="342.0" width="9.5" height="1.1" fill="#b5cea8" opacity="0.34"/><rect x="1846.0" y="342.0" width="4.7" height="1.1" fill="#4fc1ff" opacity="0.48"/><rect x="1851.9" y="342.0" width="4.0" height="1.1" fill="#d4d4d4" opacity="0.27"/><rect x="1840.1" y="344.4" width="7.4" height="1.1" fill="#6a9955" opacity="0.49"/><rect x="1848.7" y="344.4" width="10.1" height="1.1" fill="#d4d4d4" opacity="0.47"/><rect x="1861.2" y="344.4" width="4.0" height="1.1" fill="#d4d4d4" opacity="0.40"/><rect x="1830.5" y="349.2" width="8.5" height="1.1" fill="#dcdcaa" opacity="0.30"/><rect x="1830.5" y="351.6" width="7.8" height="1.1" fill="#b5cea8" opacity="0.29"/><rect x="1840.1" y="354.0" width="10.1" height="1.1" fill="#4ec9b0" opacity="0.29"/><rect x="1851.4" y="354.0" width="3.7" height="1.1" fill="#9cdcfe" opacity="0.26"/><rect x="1857.5" y="354.0" width="1.5" height="1.1" fill="#d4d4d4" opacity="0.25"/><rect x="1835.3" y="358.0" width="10.2" height="1.1" fill="#9cdcfe" opacity="0.31"/><rect x="1846.7" y="358.0" width="3.5" height="1.1" fill="#9cdcfe" opacity="0.26"/><rect x="1830.5" y="367.6" width="9.1" height="1.1" fill="#dcdcaa" opacity="0.42"/><rect x="1842.0" y="367.6" width="10.1" height="1.1" fill="#6a9955" opacity="0.41"/><rect x="1835.3" y="370.0" width="5.9" height="1.1" fill="#b5cea8" opacity="0.46"/><rect x="1842.4" y="370.0" width="5.5" height="1.1" fill="#c586c0" opacity="0.30"/><rect x="1830.5" y="374.0" width="12.4" height="1.1" fill="#9cdcfe" opacity="0.46"/><rect x="1845.3" y="374.0" width="6.6" height="1.1" fill="#d4d4d4" opacity="0.42"/><rect x="1840.1" y="376.4" width="12.7" height="1.1" fill="#b5cea8" opacity="0.35"/><rect x="1855.2" y="376.4" width="1.9" height="1.1" fill="#9cdcfe" opacity="0.29"/><rect x="1835.3" y="378.8" width="6.8" height="1.1" fill="#9cdcfe" opacity="0.43"/><rect x="1843.3" y="378.8" width="3.5" height="1.1" fill="#9cdcfe" opacity="0.41"/><rect x="1849.2" y="378.8" width="3.7" height="1.1" fill="#4fc1ff" opacity="0.27"/><rect x="1855.3" y="378.8" width="11.4" height="1.1" fill="#b5cea8" opacity="0.45"/><rect x="1869.1" y="378.8" width="4.1" height="1.1" fill="#9cdcfe" opacity="0.47"/><rect x="1830.5" y="383.6" width="3.4" height="1.1" fill="#9cdcfe" opacity="0.27"/><rect x="1836.3" y="383.6" width="10.0" height="1.1" fill="#d4d4d4" opacity="0.27"/><rect x="1840.1" y="386.0" width="6.5" height="1.1" fill="#dcdcaa" opacity="0.32"/><rect x="1847.8" y="386.0" width="5.8" height="1.1" fill="#6a9955" opacity="0.26"/><rect x="1854.8" y="386.0" width="1.4" height="1.1" fill="#4ec9b0" opacity="0.38"/><rect x="1835.3" y="398.4" width="8.7" height="1.1" fill="#9cdcfe" opacity="0.34"/><rect x="1835.3" y="400.8" width="12.5" height="1.1" fill="#9cdcfe" opacity="0.39"/><rect x="1849.0" y="400.8" width="2.0" height="1.1" fill="#4fc1ff" opacity="0.38"/><rect x="1835.3" y="408.0" width="10.6" height="1.1" fill="#9cdcfe" opacity="0.49"/><rect x="1835.3" y="410.4" width="13.4" height="1.1" fill="#6a9955" opacity="0.45"/><rect x="1851.1" y="410.4" width="1.1" height="1.1" fill="#9cdcfe" opacity="0.28"/><rect x="1840.1" y="415.2" width="4.2" height="1.1" fill="#c586c0" opacity="0.34"/><rect x="1845.5" y="415.2" width="13.2" height="1.1" fill="#9cdcfe" opacity="0.36"/><rect x="1861.1" y="415.2" width="3.3" height="1.1" fill="#b5cea8" opacity="0.33"/><rect x="1865.5" y="415.2" width="0.1" height="1.1" fill="#d4d4d4" opacity="0.29"/></svg><!--MM1-->

<!-- ===== panel / terminals ===== -->
<div class="a" style="left:323px;top:668px;width:1571px;height:396px;background:#181818;border-top:1px solid #2b2b2b"></div>
<div class="a" style="left:669px;top:700px;width:1px;height:364px;background:#2b2b2b"></div>
<div class="a" style="left:686.500px;top:700px;width:1px;height:364px;background:#2b2b2b"></div>
<div class="a" style="left:1030.500px;top:700px;width:1px;height:364px;background:#2b2b2b"></div>
<div class="a" style="left:1048px;top:700px;width:1px;height:364px;background:#2b2b2b"></div>
<div class="a" style="left:1762px;top:700px;width:1px;height:364px;background:#101010"></div>
<div class="a" style="left:1779.500px;top:700px;width:1px;height:364px;background:#2e2e2e"></div>
<div class="term" style="left:345.500px;top:778.600px"><span style="color:#ddd74f">ython</span> .\dummy_airplane_app.py</div>
<div class="a" style="left:346px;top:797px;width:9.500px;height:19.500px;border:1.500px solid #ccc"></div>
<div class="term" style="left:710.300px;top:778.600px"><span style="color:#ddd74f">ython</span> .\X_Plane_Chair_Control_App
\src\state_machine.py
State changed to IDLE
State changed to RUNNING
(falcon2_env) PS C:\Users\Docu
ments\2025\Falcon_2\Falcon
_2_Control_And_Interface&gt; <span style="color:#ddd74f">p</span>
<span style="color:#ddd74f">ython</span> .\X_Plane_Chair_Control_App
\src\state_machine.py
State changed to IDLE
State changed to WAITING
State changed to RUNNING</div>
<svg class="a" style="left:693.500px;top:863px" width="12" height="12" viewBox="0 0 12 12"><circle cx="6" cy="6" r="4" fill="none" stroke="#777" stroke-width="1.600"/></svg>
<div class="a" style="left:710.800px;top:1026.600px;width:9.500px;height:19.500px;border:1.500px solid #ccc"></div>
<div class="term" style="left:1073.500px;top:1008.300px">Latest Data: (0.8399999737739563, 0.
0, 0.0, 0.0, 0.0, 0.0, False)
Latest Data: (0.8399999737739563, 0.</div>
<!-- terminal list -->
<svg class="a" style="left:1820px;top:680px" width="74" height="17" viewBox="0 0 74 17" fill="none" stroke="#ccc" stroke-width="1.400"><path d="M0 9h5"/><path d="M27.500 11.500 34 5l6.500 6.500"/><path d="M60 3l11 11M71 3 60 14"/></svg>
<div class="a" style="left:1829px;top:788px;width:65px;height:27px;background:#3a3a40"></div>
<span class="t" style="left:1832.0px;top:716.9px;font-size:15.8px;color:#ccc;letter-spacing:0.20px;">python</span>
<span class="t" style="left:1832.0px;top:743.3px;font-size:15.8px;color:#ccc;letter-spacing:0.20px;">python</span>
<span class="t" style="left:1832.0px;top:769.7px;font-size:15.8px;color:#ccc;letter-spacing:0.20px;">python</span>
<span class="t" style="left:1832.0px;top:796.1px;font-size:15.8px;color:#ddd;letter-spacing:0.20px;">python</span>
<!-- ===== Qt main window (gains) ===== -->
<div class="win qt" style="left:182px;top:247.800px;width:660px;height:538.500px;background:#f0f0f0;border-radius:8px;box-shadow:0 4px 14px rgba(0,0,0,.45)">
 <div class="a" style="left:0;top:87.2px;width:660px;height:21px;background:#fff;border-bottom:1.500px solid #6b6b6b"></div>
 <div class="a" style="left:0;top:127.2px;width:660px;height:20.500px;background:#fff;border-bottom:1.500px solid #6b6b6b"></div>
 <div class="a" style="left:11px;top:170.2px;width:649px;height:332px;background:#fafafa;border-top:1.7px solid #e6e6e6;border-bottom:1px solid #e4e4e4"></div>
 <span class="t" style="left:40.2px;top:196.7px;font-size:13.3px;color:#505050;letter-spacing:-0.20px;">master</span>
 <span class="t" style="left:34.0px;top:219.3px;font-size:13.3px;color:#505050;letter-spacing:-0.17px;">Gain: 1.4</span>
 <div class="a" style="left:45.5px;top:239.2px;width:3px;height:183px;background:#dcdcdc;border-radius:1.5px"></div>
 <div class="a" style="left:35.0px;top:245.7px;width:4px;height:1px;background:#d2d2d2"></div>
 <div class="a" style="left:35.0px;top:262.7px;width:4px;height:1px;background:#d2d2d2"></div>
 <div class="a" style="left:35.0px;top:279.7px;width:4px;height:1px;background:#d2d2d2"></div>
 <div class="a" style="left:35.0px;top:296.7px;width:4px;height:1px;background:#d2d2d2"></div>
 <div class="a" style="left:35.0px;top:313.7px;width:4px;height:1px;background:#d2d2d2"></div>
 <div class="a" style="left:35.0px;top:330.7px;width:4px;height:1px;background:#d2d2d2"></div>
 <div class="a" style="left:35.0px;top:347.7px;width:4px;height:1px;background:#d2d2d2"></div>
 <div class="a" style="left:35.0px;top:364.7px;width:4px;height:1px;background:#d2d2d2"></div>
 <div class="a" style="left:35.0px;top:381.7px;width:4px;height:1px;background:#d2d2d2"></div>
 <div class="a" style="left:35.0px;top:398.7px;width:4px;height:1px;background:#d2d2d2"></div>
 <div class="a" style="left:35.0px;top:415.7px;width:4px;height:1px;background:#d2d2d2"></div>
 <svg class="a" style="left:37.5px;top:292.7px" width="17" height="9" viewBox="0 0 17 9"><path d="M0 4.500 4.500.300H16a.800.800 0 0 1 .8.800v6.800a.800.800 0 0 1-.8.800H4.500z" fill="#2f7fd6"/></svg>
 <span class="t" style="left:103.3px;top:196.7px;font-size:13.3px;color:#505050;letter-spacing:-0.61px;">xaccel</span>
 <span class="t" style="left:94.3px;top:219.3px;font-size:13.3px;color:#505050;letter-spacing:-0.17px;">Gain: 0.6</span>
 <div class="a" style="left:105.8px;top:239.2px;width:3px;height:183px;background:#dcdcdc;border-radius:1.5px"></div>
 <div class="a" style="left:95.3px;top:245.7px;width:4px;height:1px;background:#d2d2d2"></div>
 <div class="a" style="left:95.3px;top:262.7px;width:4px;height:1px;background:#d2d2d2"></div>
 <div class="a" style="left:95.3px;top:279.7px;width:4px;height:1px;background:#d2d2d2"></div>
 <div class="a" style="left:95.3px;top:296.7px;width:4px;height:1px;background:#d2d2d2"></div>
 <div class="a" style="left:95.3px;top:313.7px;width:4px;height:1px;background:#d2d2d2"></div>
 <div class="a" style="left:95.3px;top:330.7px;width:4px;height:1px;background:#d2d2d2"></div>
 <div class="a" style="left:95.3px;top:347.7px;width:4px;height:1px;background:#d2d2d2"></div>
 <div class="a" style="left:95.3px;top:364.7px;width:4px;height:1px;background:#d2d2d2"></div>
 <div class="a" style="left:95.3px;top:381.7px;width:4px;height:1px;background:#d2d2d2"></div>
 <div class="a" style="left:95.3px;top:398.7px;width:4px;height:1px;background:#d2d2d2"></div>
 <div class="a" style="left:95.3px;top:415.7px;width:4px;height:1px;background:#d2d2d2"></div>
 <svg class="a" style="left:97.8px;top:360.7px" width="17" height="9" viewBox="0 0 17 9"><path d="M0 4.500 4.500.300H16a.800.800 0 0 1 .8.800v6.800a.800.800 0 0 1-.8.800H4.500z" fill="#2f7fd6"/></svg>
 <span class="t" style="left:163.5px;top:196.7px;font-size:13.3px;color:#505050;letter-spacing:-0.61px;">yaccel</span>
 <span class="t" style="left:154.5px;top:219.3px;font-size:13.3px;color:#505050;letter-spacing:-0.17px;">Gain: 1.4</span>
 <div class="a" style="left:166.0px;top:239.2px;width:3px;height:183px;background:#dcdcdc;border-radius:1.5px"></div>
 <div class="a" style="left:155.5px;top:245.7px;width:4px;height:1px;background:#d2d2d2"></div>
 <div class="a" style="left:155.5px;top:262.7px;width:4px;height:1px;background:#d2d2d2"></div>
 <div class="a" style="left:155.5px;top:279.7px;width:4px;height:1px;background:#d2d2d2"></div>
 <div class="a" style="left:155.5px;top:296.7px;width:4px;height:1px;background:#d2d2d2"></div>
 <div class="a" style="left:155.5px;top:313.7px;width:4px;height:1px;background:#d2d2d2"></div>
 <div class="a" style="left:155.5px;top:330.7px;width:4px;height:1px;background:#d2d2d2"></div>
 <div class="a" style="left:155.5px;top:347.7px;width:4px;height:1px;background:#d2d2d2"></div>
 <div class="a" style="left:155.5px;top:364.7px;width:4px;height:1px;background:#d2d2d2"></div>
 <div class="a" style="left:155.5px;top:381.7px;width:4px;height:1px;background:#d2d2d2"></div>
 <div class="a" style="left:155.5px;top:398.7px;width:4px;height:1px;background:#d2d2d2"></div>
 <div class="a" style="left:155.5px;top:415.7px;width:4px;height:1px;background:#d2d2d2"></div>
 <svg class="a" style="left:158.0px;top:292.7px" width="17" height="9" viewBox="0 0 17 9"><path d="M0 4.500 4.500.300H16a.800.800 0 0 1 .8.800v6.800a.800.800 0 0 1-.8.800H4.500z" fill="#2f7fd6"/></svg>
 <span class="t" style="left:224.5px;top:196.7px;font-size:13.3px;color:#505050;letter-spacing:-0.77px;">zaccel</span>
 <span class="t" style="left:215.0px;top:219.3px;font-size:13.3px;color:#505050;letter-spacing:-0.17px;">Gain: 0.8</span>
 <div class="a" style="left:226.5px;top:239.2px;width:3px;height:183px;background:#dcdcdc;border-radius:1.5px"></div>
 <div class="a" style="left:216.0px;top:245.7px;width:4px;height:1px;background:#d2d2d2"></div>
 <div class="a" style="left:216.0px;top:262.7px;width:4px;height:1px;background:#d2d2d2"></div>
 <div class="a" style="left:216.0px;top:279.7px;width:4px;height:1px;background:#d2d2d2"></div>
 <div class="a" style="left:216.0px;top:296.7px;width:4px;height:1px;background:#d2d2d2"></div>
 <div class="a" style="left:216.0px;top:313.7px;width:4px;height:1px;background:#d2d2d2"></div>
 <div class="a" style="left:216.0px;top:330.7px;width:4px;height:1px;background:#d2d2d2"></div>
 <div class="a" style="left:216.0px;top:347.7px;width:4px;height:1px;background:#d2d2d2"></div>
 <div class="a" style="left:216.0px;top:364.7px;width:4px;height:1px;background:#d2d2d2"></div>
 <div class="a" style="left:216.0px;top:381.7px;width:4px;height:1px;background:#d2d2d2"></div>
 <div class="a" style="left:216.0px;top:398.7px;width:4px;height:1px;background:#d2d2d2"></div>
 <div class="a" style="left:216.0px;top:415.7px;width:4px;height:1px;background:#d2d2d2"></div>
 <svg class="a" style="left:218.5px;top:343.7px" width="17" height="9" viewBox="0 0 17 9"><path d="M0 4.500 4.500.300H16a.800.800 0 0 1 .8.800v6.800a.800.800 0 0 1-.8.800H4.500z" fill="#2f7fd6"/></svg>
 <span class="t" style="left:291.8px;top:196.7px;font-size:13.3px;color:#505050;letter-spacing:0.20px;">roll</span>
 <span class="t" style="left:275.0px;top:219.3px;font-size:13.3px;color:#505050;letter-spacing:-0.17px;">Gain: 1.0</span>
 <div class="a" style="left:286.5px;top:239.2px;width:3px;height:183px;background:#dcdcdc;border-radius:1.5px"></div>
 <div class="a" style="left:276.0px;top:245.7px;width:4px;height:1px;background:#d2d2d2"></div>
 <div class="a" style="left:276.0px;top:262.7px;width:4px;height:1px;background:#d2d2d2"></div>
 <div class="a" style="left:276.0px;top:279.7px;width:4px;height:1px;background:#d2d2d2"></div>
 <div class="a" style="left:276.0px;top:296.7px;width:4px;height:1px;background:#d2d2d2"></div>
 <div class="a" style="left:276.0px;top:313.7px;width:4px;height:1px;background:#d2d2d2"></div>
 <div class="a" style="left:276.0px;top:330.7px;width:4px;height:1px;background:#d2d2d2"></div>
 <div class="a" style="left:276.0px;top:347.7px;width:4px;height:1px;background:#d2d2d2"></div>
 <div class="a" style="left:276.0px;top:364.7px;width:4px;height:1px;background:#d2d2d2"></div>
 <div class="a" style="left:276.0px;top:381.7px;width:4px;height:1px;background:#d2d2d2"></div>
 <div class="a" style="left:276.0px;top:398.7px;width:4px;height:1px;background:#d2d2d2"></div>
 <div class="a" style="left:276.0px;top:415.7px;width:4px;height:1px;background:#d2d2d2"></div>
 <svg class="a" style="left:278.5px;top:327.2px" width="17" height="9" viewBox="0 0 17 9"><path d="M0 4.500 4.500.300H16a.800.800 0 0 1 .8.800v6.800a.800.800 0 0 1-.8.800H4.500z" fill="#2f7fd6"/></svg>
 <span class="t" style="left:347.5px;top:196.7px;font-size:13.3px;color:#505050;letter-spacing:-0.01px;">pitch</span>
 <span class="t" style="left:335.5px;top:219.3px;font-size:13.3px;color:#505050;letter-spacing:-0.17px;">Gain: 1.0</span>
 <div class="a" style="left:347.0px;top:239.2px;width:3px;height:183px;background:#dcdcdc;border-radius:1.5px"></div>
 <div class="a" style="left:336.5px;top:245.7px;width:4px;height:1px;background:#d2d2d2"></div>
 <div class="a" style="left:336.5px;top:262.7px;width:4px;height:1px;background:#d2d2d2"></div>
 <div class="a" style="left:336.5px;top:279.7px;width:4px;height:1px;background:#d2d2d2"></div>
 <div class="a" style="left:336.5px;top:296.7px;width:4px;height:1px;background:#d2d2d2"></div>
 <div class="a" style="left:336.5px;top:313.7px;width:4px;height:1px;background:#d2d2d2"></div>
 <div class="a" style="left:336.5px;top:330.7px;width:4px;height:1px;background:#d2d2d2"></div>
 <div class="a" style="left:336.5px;top:347.7px;width:4px;height:1px;background:#d2d2d2"></div>
 <div class="a" style="left:336.5px;top:364.7px;width:4px;height:1px;background:#d2d2d2"></div>
 <div class="a" style="left:336.5px;top:381.7px;width:4px;height:1px;background:#d2d2d2"></div>
 <div class="a" style="left:336.5px;top:398.7px;width:4px;height:1px;background:#d2d2d2"></div>
 <div class="a" style="left:336.5px;top:415.7px;width:4px;height:1px;background:#d2d2d2"></div>
 <svg class="a" style="left:339.0px;top:327.2px" width="17" height="9" viewBox="0 0 17 9"><path d="M0 4.500 4.500.300H16a.800.800 0 0 1 .8.800v6.800a.800.800 0 0 1-.8.800H4.500z" fill="#2f7fd6"/></svg>
 <span class="t" style="left:410.5px;top:196.7px;font-size:13.3px;color:#505050;letter-spacing:-0.20px;">yaw</span>
 <span class="t" style="left:396.0px;top:219.3px;font-size:13.3px;color:#505050;letter-spacing:-0.17px;">Gain: 1.0</span>
 <div class="a" style="left:407.5px;top:239.2px;width:3px;height:183px;background:#dcdcdc;border-radius:1.5px"></div>
 <div class="a" style="left:397.0px;top:245.7px;width:4px;height:1px;background:#d2d2d2"></div>
 <div class="a" style="left:397.0px;top:262.7px;width:4px;height:1px;background:#d2d2d2"></div>
 <div class="a" style="left:397.0px;top:279.7px;width:4px;height:1px;background:#d2d2d2"></div>
 <div class="a" style="left:397.0px;top:296.7px;width:4px;height:1px;background:#d2d2d2"></div>
 <div class="a" style="left:397.0px;top:313.7px;width:4px;height:1px;background:#d2d2d2"></div>
 <div class="a" style="left:397.0px;top:330.7px;width:4px;height:1px;background:#d2d2d2"></div>
 <div class="a" style="left:397.0px;top:347.7px;width:4px;height:1px;background:#d2d2d2"></div>
 <div class="a" style="left:397.0px;top:364.7px;width:4px;height:1px;background:#d2d2d2"></div>
 <div class="a" style="left:397.0px;top:381.7px;width:4px;height:1px;background:#d2d2d2"></div>
 <div class="a" style="left:397.0px;top:398.7px;width:4px;height:1px;background:#d2d2d2"></div>
 <div class="a" style="left:397.0px;top:415.7px;width:4px;height:1px;background:#d2d2d2"></div>
 <svg class="a" style="left:399.5px;top:327.2px" width="17" height="9" viewBox="0 0 17 9"><path d="M0 4.500 4.500.300H16a.800.800 0 0 1 .8.800v6.800a.800.800 0 0 1-.8.800H4.500z" fill="#2f7fd6"/></svg>
 <div class="a" style="left:458px;top:218.2px;width:128.500px;height:203px;background:#fdfdfd;border:1px solid #e7e7e7;border-radius:3px"></div>
 <span class="t" style="left:460.3px;top:313.5px;font-size:13.8px;color:#3a3a3a;letter-spacing:-0.70px;">START SIMULATION</span>
 <div class="a" style="left:595px;top:218.2px;width:128.500px;height:203px;background:#fdfdfd;border:1px solid #e7e7e7;border-radius:3px"></div>
 <div class="a" style="left:35px;top:453.2px;width:368.500px;height:25.500px;background:#fdfdfd;border:1px solid #dedede;border-bottom-color:#cfcfcf;border-radius:3px"></div>
 <span class="t" style="left:186.5px;top:459.9px;font-size:13.8px;color:#3a3a3a;letter-spacing:-0.95px;">Reset Gains</span>
 <div class="a" style="left:412px;top:453.2px;width:368.500px;height:25.500px;background:#fdfdfd;border:1px solid #dedede;border-bottom-color:#cfcfcf;border-radius:3px"></div>
 <span class="t" style="left:558.7px;top:460.2px;font-size:13.8px;color:#3a3a3a;letter-spacing:-0.73px;">Manual Mode</span>
</div>
<!-- ===== Airplane Pose Control ===== -->
<div class="win" style="left:62px;top:35px;width:386.700px;height:398.700px;background:#f1f1f1;border-radius:8px;box-shadow:0 16px 38px rgba(0,0,0,.36),0 0 0 1px rgba(90,90,90,.35)">
 <div class="a" style="left:0;top:0;width:100%;height:35px;background:#f3f3f3"></div>
 <div class="a" style="left:9.200px;top:8.800px;width:18.500px;height:15.200px;background:#fdfdfd;border:1.500px solid #b9b9b9"><div class="a" style="left:1.500px;top:1.500px;width:6px;height:8.500px;background:#3e8f84"></div><div class="a" style="left:12.500px;top:1px;width:1.500px;height:4px;background:#7aa"></div></div>
 <span class="t" style="left:33.8px;top:10.3px;font-size:14.0px;color:#444;letter-spacing:0.08px;">Airplane Pose Control</span>
 <svg class="a" style="left:236px;top:7px" width="135" height="20" viewBox="0 0 135 20" fill="none" stroke-width="1.100"><path d="M4 10.500h12" stroke="#b5b5b5"/><rect x="60.500" y="4.500" width="11" height="11" rx="1" stroke="#333"/><path d="M117 4l12 12M129 4 117 16" stroke="#333"/></svg>
 <span class="t" style="left:13.3px;top:48.9px;font-size:15.2px;color:#5c5c5c;font-family:'Liberation Serif',serif;letter-spacing:-0.34px;">xpos: -13</span>
 <div class="a" style="left:13px;top:76.8px;width:360px;height:2.400px;background:#e5e5e5;border-radius:1px"></div>
 <div class="a" style="left:174px;top:70.300px;width:11.500px;height:16.500px;background:#d2d2d2;border-radius:1px"></div>
 <span class="t" style="left:13.3px;top:96.4px;font-size:15.2px;color:#5c5c5c;font-family:'Liberation Serif',serif;letter-spacing:-0.20px;">ypos: 0</span>
 <div class="a" style="left:13px;top:124.8px;width:360px;height:2.400px;background:#e5e5e5;border-radius:1px"></div>
 <div class="a" style="left:187.5px;top:117.5px;width:11px;height:17px;background:#2f7fd6;border-radius:1px"></div>
 <span class="t" style="left:13.3px;top:143.9px;font-size:15.2px;color:#5c5c5c;font-family:'Liberation Serif',serif;letter-spacing:-0.22px;">zpos: 0</span>
 <div class="a" style="left:13px;top:172.3px;width:360px;height:2.400px;background:#e5e5e5;border-radius:1px"></div>
 <div class="a" style="left:187.5px;top:165.0px;width:11px;height:17px;background:#2f7fd6;border-radius:1px"></div>
 <span class="t" style="left:13.3px;top:191.4px;font-size:15.2px;color:#5c5c5c;font-family:'Liberation Serif',serif;letter-spacing:-0.34px;">roll: 0</span>
 <div class="a" style="left:13px;top:219.8px;width:360px;height:2.400px;background:#e5e5e5;border-radius:1px"></div>
 <div class="a" style="left:187.5px;top:212.5px;width:11px;height:17px;background:#2f7fd6;border-radius:1px"></div>
 <span class="t" style="left:13.3px;top:238.9px;font-size:15.2px;color:#5c5c5c;font-family:'Liberation Serif',serif;letter-spacing:-0.33px;">pitch: 0</span>
 <div class="a" style="left:13px;top:267.3px;width:360px;height:2.400px;background:#e5e5e5;border-radius:1px"></div>
 <div class="a" style="left:187.5px;top:260.0px;width:11px;height:17px;background:#2f7fd6;border-radius:1px"></div>
 <span class="t" style="left:13.3px;top:286.4px;font-size:15.2px;color:#5c5c5c;font-family:'Liberation Serif',serif;letter-spacing:-0.41px;">yaw: 0</span>
 <div class="a" style="left:13px;top:314.8px;width:360px;height:2.400px;background:#e5e5e5;border-radius:1px"></div>
 <div class="a" style="left:187.5px;top:307.5px;width:11px;height:17px;background:#2f7fd6;border-radius:1px"></div>
 <div class="a" style="left:13px;top:333.800px;width:16px;height:16px;border-radius:3.500px;background:#2f7fd6"></div>
 <svg class="a" style="left:13px;top:333.800px" width="16" height="16" viewBox="0 0 16 16" fill="none" stroke="#fff" stroke-width="1.400"><path d="M4 8.300l2.800 2.700L12 5.500"/></svg>
 <span class="t" style="left:35.8px;top:336.0px;font-size:13.8px;color:#4c4c4c;letter-spacing:-0.84px;">Safe State</span>
 <div class="a" style="left:14px;top:359.300px;width:358.500px;height:25px;background:#fdfdfd;border:1px solid #e0e0e0;border-bottom-color:#d0d0d0;border-radius:4px"></div>
 <span class="t" style="left:178.0px;top:366.2px;font-size:13.8px;color:#4c4c4c;letter-spacing:-1.20px;">Reset</span>
</div>
<!-- mouse cursor -->
<svg class="a" style="left:237.600px;top:117.200px" width="24.400" height="34.800" viewBox="0 0 28 40"><path d="M2.500 2.500v30l7-6.500 4.700 11.200 4.600-2-4.800-10.800h10z" fill="#fff" stroke="#000" stroke-width="2" stroke-linejoin="round"/></svg>
<!-- ===== Figure 1 ===== -->
<div class="win" style="left:798.600px;top:148.500px;width:1030.500px;height:862.800px;background:#fff;border-radius:8px;box-shadow:0 3px 12px rgba(0,0,0,.35),0 0 0 1px rgba(70,70,70,.4)">
 <div class="a" style="left:0;top:0;width:100%;height:37px;background:#f3f3f3"></div>
 <div class="a" style="left:0;top:37px;width:100%;height:52px;background:#f0f0f0;border-bottom:1px solid #d8d8d8"></div>
 <svg class="a" style="left:9px;top:8.500px" width="18" height="18" viewBox="0 0 18 18"><circle cx="9" cy="9" r="8.300" fill="#fff" stroke="#c8c8d0" stroke-width="1"/><path d="M9 9 4.500 3.500 7 2.800z" fill="#e8843c"/><path d="M9 9 2.500 7 3 10.500z" fill="#f0b429"/><path d="M9 9l5.800 5.200-1.500 1z" fill="#e0663a"/><path d="M9 9l3-5 1 .6z" fill="#9bc46a"/><path d="M9 9l-1.500 5.200 1.500.3z" fill="#a8cf8a"/></svg>
 <span class="t" style="left:31.5px;top:10.5px;font-size:14.0px;color:#9b9b9b;letter-spacing:0.09px;">Figure 1</span>
 <svg class="a" style="left:880px;top:8px" width="140" height="20" viewBox="0 0 140 20" fill="none" stroke="#a6a6a6" stroke-width="1.100"><path d="M4 10h12"/><rect x="59.500" y="4.500" width="10.500" height="10.500" rx="1"/><path d="M117 4l11.500 11.500M128.500 4 117 15.500"/></svg>
 <svg class="a" style="left:4px;top:42px" width="6" height="40" viewBox="0 0 6 40"><path d="M1.500 2v36M4.500 2v36" stroke="#c4c4c4" stroke-width="1" stroke-dasharray="1 2.200"/></svg>
 <div class="a" style="left:169px;top:44px;width:1px;height:38px;background:#dadada"></div>
 <div class="a" style="left:378.500px;top:44px;width:1px;height:38px;background:#dadada"></div>
 <svg style="position:absolute;left:21.5px;top:44.19999999999999px;overflow:hidden" width="37.6" height="37.6" viewBox="0 0 72 72" fill="#000"><path d="M 57.86 45.94 C 57.86 45.86 57.86 45.79 57.81 45.71 L 35.99 27.72 L 14.18 45.71 C 14.18 45.79 14.13 45.86 14.13 45.94 L 14.13 64.15 C 14.13 65.47 15.24 66.58 16.57 66.58 L 31.13 66.58 L 31.13 52.01 L 40.86 52.01 L 40.86 66.58 L 55.42 66.58 C 56.75 66.58 57.86 65.47 57.86 64.15 z M 66.31 43.32 C 66.73 42.82 66.65 42.03 66.16 41.61 L 57.86 34.70 L 57.86 19.22 C 57.86 18.54 57.32 18.01 56.63 18.01 L 49.36 18.01 C 48.67 18.01 48.13 18.54 48.13 19.22 L 48.13 26.62 L 38.88 18.88 C 37.29 17.56 34.70 17.56 33.11 18.88 L 5.83 41.61 C 5.34 42.03 5.26 42.82 5.68 43.32 L 8.02 46.13 C 8.22 46.35 8.52 46.51 8.82 46.54 C 9.16 46.58 9.47 46.47 9.74 46.28 L 35.99 24.39 L 62.25 46.28 C 62.48 46.47 62.74 46.54 63.05 46.54 C 63.08 46.54 63.13 46.54 63.17 46.54 C 63.47 46.51 63.77 46.35 63.97 46.13 z"/></svg><svg style="position:absolute;left:71.89999999999998px;top:44.19999999999999px;overflow:hidden" width="37.6" height="37.6" viewBox="0 0 72 72" fill="#000"><path d="M 65.14 35.00 C 65.14 32.42 63.43 30.15 60.70 30.15 L 33.99 30.15 L 45.10 19.03 C 46.01 18.12 46.55 16.87 46.55 15.58 C 46.55 14.28 46.01 13.03 45.10 12.13 L 42.25 9.31 C 41.34 8.41 40.13 7.88 38.84 7.88 C 37.55 7.88 36.29 8.41 35.39 9.31 L 10.69 33.98 C 9.82 34.90 9.28 36.14 9.28 37.44 C 9.28 38.72 9.82 39.97 10.69 40.85 L 35.39 65.59 C 36.29 66.46 37.55 66.99 38.84 66.99 C 40.13 66.99 41.38 66.46 42.25 65.59 L 45.10 62.70 C 46.01 61.83 46.55 60.58 46.55 59.29 C 46.55 58.01 46.01 56.75 45.10 55.88 L 33.99 44.72 L 60.70 44.72 C 63.43 44.72 65.14 42.44 65.14 39.86 z"/></svg><svg style="position:absolute;left:120.39999999999998px;top:44.19999999999999px;overflow:hidden" width="37.6" height="37.6" viewBox="0 0 72 72" fill="#787878"><path d="M 62.71 37.44 C 62.71 36.14 62.22 34.90 61.30 34.01 L 36.60 9.31 C 35.69 8.41 34.43 7.88 33.15 7.88 C 31.86 7.88 30.64 8.41 29.74 9.31 L 26.89 12.16 C 25.98 13.03 25.44 14.28 25.44 15.58 C 25.44 16.87 25.98 18.12 26.89 18.99 L 38.00 30.15 L 11.29 30.15 C 8.56 30.15 6.85 32.42 6.85 35.00 L 6.85 39.86 C 6.85 42.44 8.56 44.72 11.29 44.72 L 38.00 44.72 L 26.89 55.84 C 25.98 56.75 25.44 58.01 25.44 59.29 C 25.44 60.58 25.98 61.83 26.89 62.74 L 29.74 65.59 C 30.64 66.46 31.86 66.99 33.15 66.99 C 34.43 66.99 35.69 66.46 36.60 65.59 L 61.30 40.89 C 62.22 39.97 62.71 38.72 62.71 37.44"/></svg><svg style="position:absolute;left:180.39999999999998px;top:44.19999999999999px;overflow:hidden" width="37.6" height="37.6" viewBox="0 0 72 72" fill="#000"><path d="M 70 37.44 C 70 36.80 69.73 36.18 69.27 35.74 L 59.56 26.01 C 59.10 25.56 58.50 25.29 57.85 25.29 C 56.52 25.29 55.43 26.40 55.43 27.72 L 55.43 32.58 L 40.85 32.58 L 40.85 18.01 L 45.71 18.01 C 47.03 18.01 48.14 16.91 48.14 15.58 C 48.14 14.93 47.87 14.33 47.42 13.87 L 37.71 4.16 C 37.25 3.70 36.64 3.44 36 3.44 C 35.35 3.44 34.74 3.70 34.28 4.16 L 24.57 13.87 C 24.12 14.33 23.85 14.93 23.85 15.58 C 23.85 16.91 24.96 18.01 26.28 18.01 L 31.14 18.01 L 31.14 32.58 L 16.56 32.58 L 16.56 27.72 C 16.56 26.40 15.47 25.29 14.14 25.29 C 13.49 25.29 12.89 25.56 12.43 26.01 L 2.72 35.74 C 2.26 36.18 2 36.80 2 37.44 C 2 38.08 2.26 38.69 2.72 39.15 L 12.43 48.86 C 12.89 49.31 13.49 49.58 14.14 49.58 C 15.47 49.58 16.56 48.49 16.56 47.16 L 16.56 42.29 L 31.14 42.29 L 31.14 56.87 L 26.28 56.87 C 24.96 56.87 23.85 57.96 23.85 59.29 C 23.85 59.94 24.12 60.54 24.57 61.00 L 34.28 70.71 C 34.74 71.17 35.35 71.44 36 71.44 C 36.64 71.44 37.25 71.17 37.71 70.71 L 47.42 61.00 C 47.87 60.54 48.14 59.94 48.14 59.29 C 48.14 57.96 47.03 56.87 45.71 56.87 L 40.85 56.87 L 40.85 42.29 L 55.43 42.29 L 55.43 47.16 C 55.43 48.49 56.52 49.58 57.85 49.58 C 58.50 49.58 59.10 49.31 59.56 48.86 L 69.27 39.15 C 69.73 38.69 70 38.08 70 37.44"/></svg><svg style="position:absolute;left:230.39999999999998px;top:44.19999999999999px;overflow:hidden" width="37.6" height="37.6" viewBox="0 0 72 72" fill="#000"><path d="M 48.13 32.58 C 48.13 41.96 40.51 49.58 31.13 49.58 C 21.76 49.58 14.13 41.96 14.13 32.58 C 14.13 23.21 21.76 15.58 31.13 15.58 C 40.51 15.58 48.13 23.21 48.13 32.58 M 67.57 64.15 C 67.57 62.87 67.04 61.61 66.16 60.74 L 53.15 47.73 C 56.22 43.28 57.86 37.97 57.86 32.58 C 57.86 17.82 45.90 5.86 31.13 5.86 C 16.38 5.86 4.42 17.82 4.42 32.58 C 4.42 47.34 16.38 59.30 31.13 59.30 C 36.52 59.30 41.83 57.66 46.27 54.59 L 59.29 67.57 C 60.16 68.48 61.42 69.01 62.71 69.01 C 65.37 69.01 67.57 66.81 67.57 64.15"/></svg><svg style="position:absolute;left:280.4px;top:44.19999999999999px;overflow:hidden" width="37.6" height="37.6" viewBox="0 0 72 72" fill="#000"><path d="M 20.21 56.87 L 6.85 56.87 L 6.85 61.72 L 20.21 61.72 z M 33.56 52.01 L 23.85 52.01 C 22.52 52.01 21.42 53.11 21.42 54.44 L 21.42 64.16 C 21.42 65.49 22.52 66.58 23.85 66.58 L 33.56 66.58 C 34.89 66.58 36 65.49 36 64.16 L 36 54.44 C 36 53.11 34.89 52.01 33.56 52.01 M 39.64 37.44 L 6.85 37.44 L 6.85 42.29 L 39.64 42.29 z M 15.35 18.01 L 6.85 18.01 L 6.85 22.87 L 15.35 22.87 z M 65.14 56.87 L 37.21 56.87 L 37.21 61.72 L 65.14 61.72 z M 28.71 13.16 L 19 13.16 C 17.67 13.16 16.56 14.25 16.56 15.58 L 16.56 25.29 C 16.56 26.62 17.67 27.72 19 27.72 L 28.71 27.72 C 30.03 27.72 31.14 26.62 31.14 25.29 L 31.14 15.58 C 31.14 14.25 30.03 13.16 28.71 13.16 M 53 32.58 L 43.28 32.58 C 41.96 32.58 40.85 33.68 40.85 35.01 L 40.85 44.72 C 40.85 46.05 41.96 47.16 43.28 47.16 L 53 47.16 C 54.32 47.16 55.42 46.05 55.42 44.72 L 55.42 35.01 C 55.42 33.68 54.32 32.58 53 32.58 M 65.14 37.44 L 56.64 37.44 L 56.64 42.29 L 65.14 42.29 z M 65.14 18.01 L 32.35 18.01 L 32.35 22.87 L 65.14 22.87 z"/></svg><svg style="position:absolute;left:330.9px;top:44.19999999999999px;overflow:hidden" width="37.6" height="37.6" viewBox="0 0 72 72" fill="#000"><path d="M 74.85 61.72 L 2 61.72 L 2 8.29 L -2.85 8.29 L -2.85 66.58 L 74.85 66.58 z M 70 14.37 C 70 13.69 69.46 13.16 68.78 13.16 L 52.27 13.16 C 51.21 13.16 50.65 14.44 51.44 15.24 L 56.03 19.83 L 38.43 37.44 L 29.59 28.6 C 29.09 28.11 28.33 28.11 27.84 28.6 L 5.64 50.79 L 12.93 58.08 L 28.71 42.29 L 37.56 51.14 C 38.05 51.63 38.80 51.63 39.30 51.14 L 63.32 27.12 L 67.91 31.71 C 68.71 32.51 70 31.93 70 30.87 z"/></svg><svg style="position:absolute;left:389.4px;top:44.19999999999999px;overflow:hidden" width="37.6" height="37.6" viewBox="0 0 72 72" fill="#000"><path d="M 21.42 61.72 L 21.42 47.16 L 50.56 47.16 L 50.56 61.72 z M 55.42 61.72 L 55.42 45.94 C 55.42 43.93 53.79 42.29 51.78 42.29 L 20.21 42.29 C 18.20 42.29 16.56 43.93 16.56 45.94 L 16.56 61.72 L 11.71 61.72 L 11.71 13.16 L 16.56 13.16 L 16.56 28.94 C 16.56 30.95 18.20 32.58 20.21 32.58 L 42.06 32.58 C 44.08 32.58 45.71 30.95 45.71 28.94 L 45.71 13.16 C 46.47 13.16 47.95 13.76 48.48 14.29 L 59.14 24.95 C 59.64 25.45 60.28 27.00 60.28 27.72 L 60.28 61.72 z M 40.85 26.51 C 40.85 27.15 40.28 27.72 39.64 27.72 L 32.35 27.72 C 31.70 27.72 31.14 27.15 31.14 26.51 L 31.14 14.37 C 31.14 13.72 31.70 13.16 32.35 13.16 L 39.64 13.16 C 40.28 13.16 40.85 13.72 40.85 14.37 z M 65.14 27.72 C 65.14 25.72 64.00 22.94 62.56 21.50 L 51.93 10.87 C 50.49 9.44 47.71 8.29 45.71 8.29 L 10.5 8.29 C 8.49 8.29 6.85 9.93 6.85 11.94 L 6.85 62.94 C 6.85 64.95 8.49 66.58 10.5 66.58 L 61.5 66.58 C 63.50 66.58 65.14 64.95 65.14 62.94 z"/></svg>
 <span class="t" style="left:735.0px;top:55.0px;font-size:17.6px;color:#222;letter-spacing:0.41px;">x=−99.7486, y=−99.7400, z=6.0319</span>
 <svg class="a" style="left:-0.800px;top:89px" width="1031.040" height="773.280" viewBox="0 0 460.800 345.600"><style>#mpl *{stroke-linejoin:round;stroke-linecap:butt}</style><g id="mpl">
<defs>
<style type="text/css">*{stroke-linejoin: round; stroke-linecap: butt}</style>
</defs>
<g id="figure_1">
<g id="patch_1">
<path d="M 0 345.6 L 460.8 345.6 L 460.8 0 L 0 0 L 0 345.6 z" style="fill: none"/>
</g>
<g id="patch_2">
<path d="M 103.10 307.58 L 369.21 307.58 L 369.21 41.47 L 103.10 41.47 L 103.10 307.58 z" style="fill: none"/>
</g>
<g id="pane3d_1">
<g id="patch_3">
<path d="M 121.19 226.40 L 241.89 174.97 L 241.97 65.89 L 116.45 111.14" style="fill: #f2f2f2; opacity: 0.5; stroke: #f2f2f2; stroke-linejoin: miter"/>
</g>
</g>
<g id="pane3d_2">
<g id="patch_4">
<path d="M 241.89 174.97 L 358.66 228.58 L 363.42 113.06 L 241.97 65.89" style="fill: #e6e6e6; opacity: 0.5; stroke: #e6e6e6; stroke-linejoin: miter"/>
</g>
</g>
<g id="pane3d_3">
<g id="patch_5">
<path d="M 121.19 226.40 L 237.27 288.42 L 358.66 228.58 L 241.89 174.97" style="fill: #ececec; opacity: 0.5; stroke: #ececec; stroke-linejoin: miter"/>
</g>
</g>
<g id="grid3d_1">
<g id="Line3DCollection_1">
<path d="M 123.34 227.55 L 244.07 175.97 L 244.23 66.77" style="fill: none; stroke: #b0b0b0; stroke-width: 0.8"/>
<path d="M 136.37 234.51 L 257.24 182.02 L 257.90 72.08" style="fill: none; stroke: #b0b0b0; stroke-width: 0.8"/>
<path d="M 149.65 241.60 L 270.64 188.17 L 271.81 77.48" style="fill: none; stroke: #b0b0b0; stroke-width: 0.8"/>
<path d="M 163.17 248.83 L 284.27 194.43 L 285.98 82.98" style="fill: none; stroke: #b0b0b0; stroke-width: 0.8"/>
<path d="M 176.95 256.19 L 298.15 200.80 L 300.40 88.58" style="fill: none; stroke: #b0b0b0; stroke-width: 0.8"/>
<path d="M 190.99 263.69 L 312.26 207.28 L 315.09 94.29" style="fill: none; stroke: #b0b0b0; stroke-width: 0.8"/>
<path d="M 205.30 271.34 L 326.63 213.88 L 330.04 100.10" style="fill: none; stroke: #b0b0b0; stroke-width: 0.8"/>
<path d="M 219.89 279.13 L 341.26 220.59 L 345.28 106.02" style="fill: none; stroke: #b0b0b0; stroke-width: 0.8"/>
<path d="M 234.76 287.08 L 356.15 227.43 L 360.81 112.05" style="fill: none; stroke: #b0b0b0; stroke-width: 0.8"/>
</g>
</g>
<g id="grid3d_2">
<g id="Line3DCollection_2">
<path d="M 119.14 110.16 L 123.77 225.30 L 239.88 287.13" style="fill: none; stroke: #b0b0b0; stroke-width: 0.8"/>
<path d="M 135.15 104.39 L 139.13 218.75 L 255.40 279.48" style="fill: none; stroke: #b0b0b0; stroke-width: 0.8"/>
<path d="M 150.87 98.73 L 154.23 212.32 L 270.62 271.97" style="fill: none; stroke: #b0b0b0; stroke-width: 0.8"/>
<path d="M 166.32 93.16 L 169.06 206.00 L 285.57 264.60" style="fill: none; stroke: #b0b0b0; stroke-width: 0.8"/>
<path d="M 181.49 87.69 L 183.65 199.78 L 300.25 257.37" style="fill: none; stroke: #b0b0b0; stroke-width: 0.8"/>
<path d="M 196.41 82.31 L 198.00 193.67 L 314.67 250.26" style="fill: none; stroke: #b0b0b0; stroke-width: 0.8"/>
<path d="M 211.06 77.03 L 212.11 187.66 L 328.83 243.29" style="fill: none; stroke: #b0b0b0; stroke-width: 0.8"/>
<path d="M 225.47 71.84 L 225.99 181.75 L 342.74 236.43" style="fill: none; stroke: #b0b0b0; stroke-width: 0.8"/>
<path d="M 239.63 66.73 L 239.64 175.93 L 356.40 229.69" style="fill: none; stroke: #b0b0b0; stroke-width: 0.8"/>
</g>
</g>
<g id="grid3d_3">
<g id="Line3DCollection_3">
<path d="M 358.75 226.36 L 241.89 172.87 L 121.10 224.18" style="fill: none; stroke: #b0b0b0; stroke-width: 0.8"/>
<path d="M 359.30 212.95 L 241.90 160.17 L 120.55 210.80" style="fill: none; stroke: #b0b0b0; stroke-width: 0.8"/>
<path d="M 359.86 199.41 L 241.91 147.37 L 119.99 197.29" style="fill: none; stroke: #b0b0b0; stroke-width: 0.8"/>
<path d="M 360.42 185.75 L 241.92 134.46 L 119.43 183.66" style="fill: none; stroke: #b0b0b0; stroke-width: 0.8"/>
<path d="M 360.99 171.96 L 241.93 121.43 L 118.86 169.90" style="fill: none; stroke: #b0b0b0; stroke-width: 0.8"/>
<path d="M 361.57 158.04 L 241.94 108.28 L 118.29 156.01" style="fill: none; stroke: #b0b0b0; stroke-width: 0.8"/>
<path d="M 362.15 143.98 L 241.95 95.02 L 117.72 141.98" style="fill: none; stroke: #b0b0b0; stroke-width: 0.8"/>
<path d="M 362.73 129.79 L 241.96 81.65 L 117.13 127.82" style="fill: none; stroke: #b0b0b0; stroke-width: 0.8"/>
<path d="M 363.33 115.47 L 241.97 68.15 L 116.54 113.53" style="fill: none; stroke: #b0b0b0; stroke-width: 0.8"/>
</g>
</g>
<g id="axis3d_1">
<g id="line2d_1">
<path d="M 121.19 226.40 L 237.27 288.42" style="fill: none; stroke: #000000; stroke-width: 0.8; stroke-linecap: square"/>
</g>
<g id="xtick_1">
<g id="line2d_2">
<path d="M 124.37 227.10 L 121.26 228.43" style="fill: none; stroke: #000000; stroke-width: 0.8; stroke-linecap: square"/>
</g>
<g id="text_1">
<!-- −100 -->
<g style="fill: #1c1c1c" transform="translate(99.206022 248.985539) scale(0.1 -0.1)">
<defs>
<path id="DejaVuSans-2212" d="M 678 2272 L 4684 2272 L 4684 1741 L 678 1741 L 678 2272 z" transform="scale(0.015625)"/>
<path id="DejaVuSans-31" d="M 794 531 L 1825 531 L 1825 4091 L 703 3866 L 703 4441 L 1819 4666 L 2450 4666 L 2450 531 L 3481 531 L 3481 0 L 794 0 L 794 531 z" transform="scale(0.015625)"/>
<path id="DejaVuSans-30" d="M 2034 4250 Q 1547 4250 1301 3770 Q 1056 3291 1056 2328 Q 1056 1369 1301 889 Q 1547 409 2034 409 Q 2525 409 2770 889 Q 3016 1369 3016 2328 Q 3016 3291 2770 3770 Q 2525 4250 2034 4250 z M 2034 4750 Q 2819 4750 3233 4129 Q 3647 3509 3647 2328 Q 3647 1150 3233 529 Q 2819 -91 2034 -91 Q 1250 -91 836 529 Q 422 1150 422 2328 Q 422 3509 836 4129 Q 1250 4750 2034 4750 z" transform="scale(0.015625)"/>
</defs>
<use href="#DejaVuSans-2212"/>
<use href="#DejaVuSans-31" transform="translate(83.789062 0)"/>
<use href="#DejaVuSans-30" transform="translate(147.412109 0)"/>
<use href="#DejaVuSans-30" transform="translate(211.035156 0)"/>
</g>
</g>
</g>
<g id="xtick_2">
<g id="line2d_3">
<path d="M 137.41 234.06 L 134.29 235.41" style="fill: none; stroke: #000000; stroke-width: 0.8; stroke-linecap: square"/>
</g>
<g id="text_2">
<!-- −75 -->
<g style="fill: #1c1c1c" transform="translate(115.364684 256.09707) scale(0.1 -0.1)">
<defs>
<path id="DejaVuSans-37" d="M 525 4666 L 3525 4666 L 3525 4397 L 1831 0 L 1172 0 L 2766 4134 L 525 4134 L 525 4666 z" transform="scale(0.015625)"/>
<path id="DejaVuSans-35" d="M 691 4666 L 3169 4666 L 3169 4134 L 1269 4134 L 1269 2991 Q 1406 3038 1543 3061 Q 1681 3084 1819 3084 Q 2600 3084 3056 2656 Q 3513 2228 3513 1497 Q 3513 744 3044 326 Q 2575 -91 1722 -91 Q 1428 -91 1123 -41 Q 819 9 494 109 L 494 744 Q 775 591 1075 516 Q 1375 441 1709 441 Q 2250 441 2565 725 Q 2881 1009 2881 1497 Q 2881 1984 2565 2268 Q 2250 2553 1709 2553 Q 1456 2553 1204 2497 Q 953 2441 691 2322 L 691 4666 z" transform="scale(0.015625)"/>
</defs>
<use href="#DejaVuSans-2212"/>
<use href="#DejaVuSans-37" transform="translate(83.789062 0)"/>
<use href="#DejaVuSans-35" transform="translate(147.412109 0)"/>
</g>
</g>
</g>
<g id="xtick_3">
<g id="line2d_4">
<path d="M 150.69 241.15 L 147.57 242.52" style="fill: none; stroke: #000000; stroke-width: 0.8; stroke-linecap: square"/>
</g>
<g id="text_3">
<!-- −50 -->
<g style="fill: #1c1c1c" transform="translate(128.582521 263.340352) scale(0.1 -0.1)">
<use href="#DejaVuSans-2212"/>
<use href="#DejaVuSans-35" transform="translate(83.789062 0)"/>
<use href="#DejaVuSans-30" transform="translate(147.412109 0)"/>
</g>
</g>
</g>
<g id="xtick_4">
<g id="line2d_5">
<path d="M 164.21 248.36 L 161.09 249.77" style="fill: none; stroke: #000000; stroke-width: 0.8; stroke-linecap: square"/>
</g>
<g id="text_4">
<!-- −25 -->
<g style="fill: #1c1c1c" transform="translate(142.047527 270.719081) scale(0.1 -0.1)">
<defs>
<path id="DejaVuSans-32" d="M 1228 531 L 3431 531 L 3431 0 L 469 0 L 469 531 Q 828 903 1448 1529 Q 2069 2156 2228 2338 Q 2531 2678 2651 2914 Q 2772 3150 2772 3378 Q 2772 3750 2511 3984 Q 2250 4219 1831 4219 Q 1534 4219 1204 4116 Q 875 4013 500 3803 L 500 4441 Q 881 4594 1212 4672 Q 1544 4750 1819 4750 Q 2544 4750 2975 4387 Q 3406 4025 3406 3419 Q 3406 3131 3298 2873 Q 3191 2616 2906 2266 Q 2828 2175 2409 1742 Q 1991 1309 1228 531 z" transform="scale(0.015625)"/>
</defs>
<use href="#DejaVuSans-2212"/>
<use href="#DejaVuSans-32" transform="translate(83.789062 0)"/>
<use href="#DejaVuSans-35" transform="translate(147.412109 0)"/>
</g>
</g>
</g>
<g id="xtick_5">
<g id="line2d_6">
<path d="M 177.99 255.71 L 174.86 257.15" style="fill: none; stroke: #000000; stroke-width: 0.8; stroke-linecap: square"/>
</g>
<g id="text_5">
<!-- 0 -->
<g style="fill: #1c1c1c" transform="translate(163.137793 278.237091) scale(0.1 -0.1)">
<use href="#DejaVuSans-30"/>
</g>
</g>
</g>
<g id="xtick_6">
<g id="line2d_7">
<path d="M 192.04 263.21 L 188.90 264.66" style="fill: none; stroke: #000000; stroke-width: 0.8; stroke-linecap: square"/>
</g>
<g id="text_6">
<!-- 25 -->
<g style="fill: #1c1c1c" transform="translate(173.937147 285.898364) scale(0.1 -0.1)">
<use href="#DejaVuSans-32"/>
<use href="#DejaVuSans-35" transform="translate(63.623047 0)"/>
</g>
</g>
</g>
<g id="xtick_7">
<g id="line2d_8">
<path d="M 206.35 270.84 L 203.21 272.33" style="fill: none; stroke: #000000; stroke-width: 0.8; stroke-linecap: square"/>
</g>
<g id="text_7">
<!-- 50 -->
<g style="fill: #1c1c1c" transform="translate(188.186728 293.707035) scale(0.1 -0.1)">
<use href="#DejaVuSans-35"/>
<use href="#DejaVuSans-30" transform="translate(63.623047 0)"/>
</g>
</g>
</g>
<g id="xtick_8">
<g id="line2d_9">
<path d="M 220.93 278.63 L 217.79 280.14" style="fill: none; stroke: #000000; stroke-width: 0.8; stroke-linecap: square"/>
</g>
<g id="text_8">
<!-- 75 -->
<g style="fill: #1c1c1c" transform="translate(202.713124 301.667398) scale(0.1 -0.1)">
<use href="#DejaVuSans-37"/>
<use href="#DejaVuSans-35" transform="translate(63.623047 0)"/>
</g>
</g>
</g>
<g id="xtick_9">
<g id="line2d_10">
<path d="M 235.81 286.56 L 232.66 288.11" style="fill: none; stroke: #000000; stroke-width: 0.8; stroke-linecap: square"/>
</g>
<g id="text_9">
<!-- 100 -->
<g style="fill: #1c1c1c" transform="translate(214.343229 309.783917) scale(0.1 -0.1)">
<use href="#DejaVuSans-31"/>
<use href="#DejaVuSans-30" transform="translate(63.623047 0)"/>
<use href="#DejaVuSans-30" transform="translate(127.246094 0)"/>
</g>
</g>
</g>
<g id="text_10">
<!-- x-axis -->
<g style="fill: #1c1c1c" transform="translate(139.414384 283.170956) rotate(-331.885442) scale(0.1 -0.1)">
<defs>
<path id="DejaVuSans-78" d="M 3513 3500 L 2247 1797 L 3578 0 L 2900 0 L 1881 1375 L 863 0 L 184 0 L 1544 1831 L 300 3500 L 978 3500 L 1906 2253 L 2834 3500 L 3513 3500 z" transform="scale(0.015625)"/>
<path id="DejaVuSans-2d" d="M 313 2009 L 1997 2009 L 1997 1497 L 313 1497 L 313 2009 z" transform="scale(0.015625)"/>
<path id="DejaVuSans-61" d="M 2194 1759 Q 1497 1759 1228 1600 Q 959 1441 959 1056 Q 959 750 1161 570 Q 1363 391 1709 391 Q 2188 391 2477 730 Q 2766 1069 2766 1631 L 2766 1759 L 2194 1759 z M 3341 1997 L 3341 0 L 2766 0 L 2766 531 Q 2569 213 2275 61 Q 1981 -91 1556 -91 Q 1019 -91 701 211 Q 384 513 384 1019 Q 384 1609 779 1909 Q 1175 2209 1959 2209 L 2766 2209 L 2766 2266 Q 2766 2663 2505 2880 Q 2244 3097 1772 3097 Q 1472 3097 1187 3025 Q 903 2953 641 2809 L 641 3341 Q 956 3463 1253 3523 Q 1550 3584 1831 3584 Q 2591 3584 2966 3190 Q 3341 2797 3341 1997 z" transform="scale(0.015625)"/>
<path id="DejaVuSans-69" d="M 603 3500 L 1178 3500 L 1178 0 L 603 0 L 603 3500 z M 603 4863 L 1178 4863 L 1178 4134 L 603 4134 L 603 4863 z" transform="scale(0.015625)"/>
<path id="DejaVuSans-73" d="M 2834 3397 L 2834 2853 Q 2591 2978 2328 3040 Q 2066 3103 1784 3103 Q 1356 3103 1142 2972 Q 928 2841 928 2578 Q 928 2378 1081 2264 Q 1234 2150 1697 2047 L 1894 2003 Q 2506 1872 2764 1633 Q 3022 1394 3022 966 Q 3022 478 2636 193 Q 2250 -91 1575 -91 Q 1294 -91 989 -36 Q 684 19 347 128 L 347 722 Q 666 556 975 473 Q 1284 391 1588 391 Q 1994 391 2212 530 Q 2431 669 2431 922 Q 2431 1156 2273 1281 Q 2116 1406 1581 1522 L 1381 1569 Q 847 1681 609 1914 Q 372 2147 372 2553 Q 372 3047 722 3315 Q 1072 3584 1716 3584 Q 2034 3584 2315 3537 Q 2597 3491 2834 3397 z" transform="scale(0.015625)"/>
</defs>
<use href="#DejaVuSans-78"/>
<use href="#DejaVuSans-2d" transform="translate(59.179688 0)"/>
<use href="#DejaVuSans-61" transform="translate(95.263672 0)"/>
<use href="#DejaVuSans-78" transform="translate(156.542969 0)"/>
<use href="#DejaVuSans-69" transform="translate(215.722656 0)"/>
<use href="#DejaVuSans-73" transform="translate(243.505859 0)"/>
</g>
</g>
</g>
<g id="axis3d_2">
<g id="line2d_11">
<path d="M 358.66 228.58 L 237.27 288.42" style="fill: none; stroke: #000000; stroke-width: 0.8; stroke-linecap: square"/>
</g>
<g id="xtick_10">
<g id="line2d_12">
<path d="M 238.88 286.59 L 241.89 288.20" style="fill: none; stroke: #000000; stroke-width: 0.8; stroke-linecap: square"/>
</g>
<g id="text_11">
<!-- −100 -->
<g style="fill: #1c1c1c" transform="translate(236.605064 310.051365) scale(0.1 -0.1)">
<use href="#DejaVuSans-2212"/>
<use href="#DejaVuSans-31" transform="translate(83.789062 0)"/>
<use href="#DejaVuSans-30" transform="translate(147.412109 0)"/>
<use href="#DejaVuSans-30" transform="translate(211.035156 0)"/>
</g>
</g>
</g>
<g id="xtick_11">
<g id="line2d_13">
<path d="M 254.39 278.96 L 257.41 280.53" style="fill: none; stroke: #000000; stroke-width: 0.8; stroke-linecap: square"/>
</g>
<g id="text_12">
<!-- −75 -->
<g style="fill: #1c1c1c" transform="translate(255.254927 302.235531) scale(0.1 -0.1)">
<use href="#DejaVuSans-2212"/>
<use href="#DejaVuSans-37" transform="translate(83.789062 0)"/>
<use href="#DejaVuSans-35" transform="translate(147.412109 0)"/>
</g>
</g>
</g>
<g id="xtick_12">
<g id="line2d_14">
<path d="M 269.62 271.46 L 272.64 273.01" style="fill: none; stroke: #000000; stroke-width: 0.8; stroke-linecap: square"/>
</g>
<g id="text_13">
<!-- −50 -->
<g style="fill: #1c1c1c" transform="translate(270.436949 294.564503) scale(0.1 -0.1)">
<use href="#DejaVuSans-2212"/>
<use href="#DejaVuSans-35" transform="translate(83.789062 0)"/>
<use href="#DejaVuSans-30" transform="translate(147.412109 0)"/>
</g>
</g>
</g>
<g id="xtick_13">
<g id="line2d_15">
<path d="M 284.57 264.10 L 287.59 265.62" style="fill: none; stroke: #000000; stroke-width: 0.8; stroke-linecap: square"/>
</g>
<g id="text_14">
<!-- −25 -->
<g style="fill: #1c1c1c" transform="translate(285.340272 287.034293) scale(0.1 -0.1)">
<use href="#DejaVuSans-2212"/>
<use href="#DejaVuSans-32" transform="translate(83.789062 0)"/>
<use href="#DejaVuSans-35" transform="translate(147.412109 0)"/>
</g>
</g>
</g>
<g id="xtick_14">
<g id="line2d_16">
<path d="M 299.25 256.87 L 302.27 258.36" style="fill: none; stroke: #000000; stroke-width: 0.8; stroke-linecap: square"/>
</g>
<g id="text_15">
<!-- 0 -->
<g style="fill: #1c1c1c" transform="translate(307.343593 279.64106) scale(0.1 -0.1)">
<use href="#DejaVuSans-30"/>
</g>
</g>
</g>
<g id="xtick_15">
<g id="line2d_17">
<path d="M 313.66 249.78 L 316.68 251.24" style="fill: none; stroke: #000000; stroke-width: 0.8; stroke-linecap: square"/>
</g>
<g id="text_16">
<!-- 25 -->
<g style="fill: #1c1c1c" transform="translate(318.530806 272.3811) scale(0.1 -0.1)">
<use href="#DejaVuSans-32"/>
<use href="#DejaVuSans-35" transform="translate(63.623047 0)"/>
</g>
</g>
</g>
<g id="xtick_16">
<g id="line2d_18">
<path d="M 327.82 242.81 L 330.84 244.25" style="fill: none; stroke: #000000; stroke-width: 0.8; stroke-linecap: square"/>
</g>
<g id="text_17">
<!-- 50 -->
<g style="fill: #1c1c1c" transform="translate(332.642572 265.250841) scale(0.1 -0.1)">
<use href="#DejaVuSans-35"/>
<use href="#DejaVuSans-30" transform="translate(63.623047 0)"/>
</g>
</g>
</g>
<g id="xtick_17">
<g id="line2d_19">
<path d="M 341.73 235.96 L 344.75 237.37" style="fill: none; stroke: #000000; stroke-width: 0.8; stroke-linecap: square"/>
</g>
<g id="text_18">
<!-- 75 -->
<g style="fill: #1c1c1c" transform="translate(346.504459 258.246838) scale(0.1 -0.1)">
<use href="#DejaVuSans-37"/>
<use href="#DejaVuSans-35" transform="translate(63.623047 0)"/>
</g>
</g>
</g>
<g id="xtick_18">
<g id="line2d_20">
<path d="M 355.40 229.23 L 358.41 230.62" style="fill: none; stroke: #000000; stroke-width: 0.8; stroke-linecap: square"/>
</g>
<g id="text_19">
<!-- 100 -->
<g style="fill: #1c1c1c" transform="translate(356.941797 251.365767) scale(0.1 -0.1)">
<use href="#DejaVuSans-31"/>
<use href="#DejaVuSans-30" transform="translate(63.623047 0)"/>
<use href="#DejaVuSans-30" transform="translate(127.246094 0)"/>
</g>
</g>
</g>
<g id="text_20">
<!-- y-axis -->
<g style="fill: #1c1c1c" transform="translate(310.701739 298.352829) rotate(-26.238473) scale(0.1 -0.1)">
<defs>
<path id="DejaVuSans-79" d="M 2059 -325 Q 1816 -950 1584 -1140 Q 1353 -1331 966 -1331 L 506 -1331 L 506 -850 L 844 -850 Q 1081 -850 1212 -737 Q 1344 -625 1503 -206 L 1606 56 L 191 3500 L 800 3500 L 1894 763 L 2988 3500 L 3597 3500 L 2059 -325 z" transform="scale(0.015625)"/>
</defs>
<use href="#DejaVuSans-79"/>
<use href="#DejaVuSans-2d" transform="translate(57.429688 0)"/>
<use href="#DejaVuSans-61" transform="translate(93.513672 0)"/>
<use href="#DejaVuSans-78" transform="translate(154.792969 0)"/>
<use href="#DejaVuSans-69" transform="translate(213.972656 0)"/>
<use href="#DejaVuSans-73" transform="translate(241.755859 0)"/>
</g>
</g>
</g>
<g id="axis3d_3">
<g id="line2d_21">
<path d="M 358.66 228.58 L 363.42 113.06" style="fill: none; stroke: #000000; stroke-width: 0.8; stroke-linecap: square"/>
</g>
<g id="xtick_19">
<g id="line2d_22">
<path d="M 357.74 225.90 L 360.76 227.28" style="fill: none; stroke: #000000; stroke-width: 0.8; stroke-linecap: square"/>
</g>
<g id="text_21">
<!-- 0 -->
<g style="fill: #1c1c1c" transform="translate(375.350818 234.1458) scale(0.1 -0.1)">
<use href="#DejaVuSans-30"/>
</g>
</g>
</g>
<g id="xtick_20">
<g id="line2d_23">
<path d="M 358.29 212.50 L 361.32 213.86" style="fill: none; stroke: #000000; stroke-width: 0.8; stroke-linecap: square"/>
</g>
<g id="text_22">
<!-- 25 -->
<g style="fill: #1c1c1c" transform="translate(372.815446 220.733068) scale(0.1 -0.1)">
<use href="#DejaVuSans-32"/>
<use href="#DejaVuSans-35" transform="translate(63.623047 0)"/>
</g>
</g>
</g>
<g id="xtick_21">
<g id="line2d_24">
<path d="M 358.84 198.97 L 361.89 200.31" style="fill: none; stroke: #000000; stroke-width: 0.8; stroke-linecap: square"/>
</g>
<g id="text_23">
<!-- 50 -->
<g style="fill: #1c1c1c" transform="translate(373.467365 207.194903) scale(0.1 -0.1)">
<use href="#DejaVuSans-35"/>
<use href="#DejaVuSans-30" transform="translate(63.623047 0)"/>
</g>
</g>
</g>
<g id="xtick_22">
<g id="line2d_25">
<path d="M 359.40 185.31 L 362.47 186.64" style="fill: none; stroke: #000000; stroke-width: 0.8; stroke-linecap: square"/>
</g>
<g id="text_24">
<!-- 75 -->
<g style="fill: #1c1c1c" transform="translate(374.12541 193.529537) scale(0.1 -0.1)">
<use href="#DejaVuSans-37"/>
<use href="#DejaVuSans-35" transform="translate(63.623047 0)"/>
</g>
</g>
</g>
<g id="xtick_23">
<g id="line2d_26">
<path d="M 359.97 171.52 L 363.05 172.83" style="fill: none; stroke: #000000; stroke-width: 0.8; stroke-linecap: square"/>
</g>
<g id="text_25">
<!-- 100 -->
<g style="fill: #1c1c1c" transform="translate(371.608416 179.735171) scale(0.1 -0.1)">
<use href="#DejaVuSans-31"/>
<use href="#DejaVuSans-30" transform="translate(63.623047 0)"/>
<use href="#DejaVuSans-30" transform="translate(127.246094 0)"/>
</g>
</g>
</g>
<g id="xtick_24">
<g id="line2d_27">
<path d="M 360.54 157.61 L 363.63 158.90" style="fill: none; stroke: #000000; stroke-width: 0.8; stroke-linecap: square"/>
</g>
<g id="text_26">
<!-- 125 -->
<g style="fill: #1c1c1c" transform="translate(372.278972 165.809967) scale(0.1 -0.1)">
<use href="#DejaVuSans-31"/>
<use href="#DejaVuSans-32" transform="translate(63.623047 0)"/>
<use href="#DejaVuSans-35" transform="translate(127.246094 0)"/>
</g>
</g>
</g>
<g id="xtick_25">
<g id="line2d_28">
<path d="M 361.11 143.56 L 364.22 144.83" style="fill: none; stroke: #000000; stroke-width: 0.8; stroke-linecap: square"/>
</g>
<g id="text_27">
<!-- 150 -->
<g style="fill: #1c1c1c" transform="translate(372.955919 151.752057) scale(0.1 -0.1)">
<use href="#DejaVuSans-31"/>
<use href="#DejaVuSans-35" transform="translate(63.623047 0)"/>
<use href="#DejaVuSans-30" transform="translate(127.246094 0)"/>
</g>
</g>
</g>
<g id="xtick_26">
<g id="line2d_29">
<path d="M 361.69 129.38 L 364.82 130.62" style="fill: none; stroke: #000000; stroke-width: 0.8; stroke-linecap: square"/>
</g>
<g id="text_28">
<!-- 175 -->
<g style="fill: #1c1c1c" transform="translate(373.639348 137.559533) scale(0.1 -0.1)">
<use href="#DejaVuSans-31"/>
<use href="#DejaVuSans-37" transform="translate(63.623047 0)"/>
<use href="#DejaVuSans-35" transform="translate(127.246094 0)"/>
</g>
</g>
</g>
<g id="xtick_27">
<g id="line2d_30">
<path d="M 362.28 115.06 L 365.42 116.28" style="fill: none; stroke: #000000; stroke-width: 0.8; stroke-linecap: square"/>
</g>
<g id="text_29">
<!-- 200 -->
<g style="fill: #1c1c1c" transform="translate(374.329353 123.230453) scale(0.1 -0.1)">
<use href="#DejaVuSans-32"/>
<use href="#DejaVuSans-30" transform="translate(63.623047 0)"/>
<use href="#DejaVuSans-30" transform="translate(127.246094 0)"/>
</g>
</g>
</g>
<g id="text_30">
<!-- z-axis -->
<g style="fill: #1c1c1c" transform="translate(406.984796 186.885287) rotate(-87.635711) scale(0.1 -0.1)">
<defs>
<path id="DejaVuSans-7a" d="M 353 3500 L 3084 3500 L 3084 2975 L 922 459 L 3084 459 L 3084 0 L 275 0 L 275 525 L 2438 3041 L 353 3041 L 353 3500 z" transform="scale(0.015625)"/>
</defs>
<use href="#DejaVuSans-7a"/>
<use href="#DejaVuSans-2d" transform="translate(52.490234 0)"/>
<use href="#DejaVuSans-61" transform="translate(88.574219 0)"/>
<use href="#DejaVuSans-78" transform="translate(149.853516 0)"/>
<use href="#DejaVuSans-69" transform="translate(209.033203 0)"/>
<use href="#DejaVuSans-73" transform="translate(236.816406 0)"/>
</g>
</g>
</g>
<g id="axes_1"/>
</g>
</g></svg>
 <svg class="a" style="left:-798.600px;top:-148.500px" width="1894" height="1064" viewBox="0 0 1894 1064"><g fill="none" stroke-width="3.300" stroke-linecap="square">
<g stroke="#000">
<path d="M1194.700 744 1255 600.200"/><path d="M1304.600 801.500 1284.400 613.500"/><path d="M1381.600 673 1334 540.300"/><path d="M1231.900 689.400 1294.400 545.500"/><path d="M1467 713.100 1428.200 581.200"/><path d="M1426.900 786.300 1417 598.600"/>
</g>
<g stroke="#e8261a">
<path d="M1194.700 744 1230.200 771.900"/><path d="M1304.600 801.500 1267.400 791"/><path d="M1381.600 673 1332.500 688.200"/><path d="M1231.900 689.400 1283 693"/><path d="M1467 713.100 1454.300 745.700"/><path d="M1426.900 786.300 1439.900 770.200"/>
</g>
<g stroke="#f2b233">
<path d="M1230.200 771.900 1255 600.200"/><path d="M1267.400 791 1284.400 613.500"/><path d="M1332.500 688.200 1334 540.300"/><path d="M1283 693 1294.400 545.500"/><path d="M1454.300 745.700 1428.200 581.200"/><path d="M1439.900 770.200 1417 598.600"/>
</g>
</g>
<path d="M1255 600.200 1294.400 545.500 1334 540.300 1428.200 581.200 1417 598.600 1284.400 613.500z" fill="#0000ff" fill-opacity=".24"/>
<path d="M1230.200 771.900 1283 693 1332.500 688.200 1454.300 745.700 1439.900 770.200 1267.400 791z" fill="#008000" fill-opacity=".2"/>
</svg>
</div>
</div><!--root-->
</body></html>
